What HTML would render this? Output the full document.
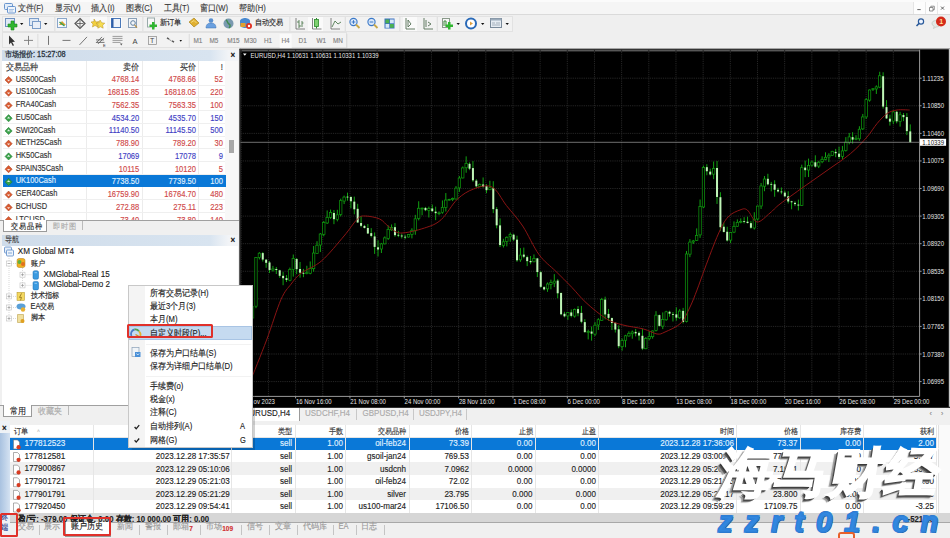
<!DOCTYPE html><html><head><meta charset="utf-8"><style>
html,body{margin:0;padding:0;width:950px;height:538px;overflow:hidden;background:#f0f0f0;font-family:"Liberation Sans", sans-serif;}
.t{position:absolute;white-space:nowrap;-webkit-text-stroke:0.12px currentColor;transform:scaleY(1.12);}
.b{position:absolute;box-sizing:border-box;}
svg{position:absolute;left:0;top:0;}
</style></head><body>
<div class="b" style="left:0px;top:0px;width:950px;height:15px;background:#f5f5f5;border-bottom:1px solid #dadada"></div>
<div class="b" style="left:0px;top:0px;width:950px;height:2px;background:#fbfbfb"></div>
<svg width="20" height="16"><rect x="4.5" y="3.5" width="8" height="6" rx="1" fill="#e4eef9" stroke="#5a8ac8" stroke-width="0.9"/><rect x="7.5" y="6.5" width="8" height="6.5" rx="1" fill="#eef4fb" stroke="#5a8ac8" stroke-width="0.9"/><path d="M9 9.5h5M9 11h4" stroke="#7aa0d0" stroke-width="0.6"/></svg>
<div class="t" style="left:17.7px;top:1.10px;font-size:7.6px;line-height:15.2px;color:#3a3a3a;">文件(F)</div>
<div class="t" style="left:54.5px;top:1.10px;font-size:7.6px;line-height:15.2px;color:#3a3a3a;">显示(V)</div>
<div class="t" style="left:91.4px;top:1.10px;font-size:7.6px;line-height:15.2px;color:#3a3a3a;">插入(I)</div>
<div class="t" style="left:125.8px;top:1.10px;font-size:7.6px;line-height:15.2px;color:#3a3a3a;">图表(C)</div>
<div class="t" style="left:163.6px;top:1.10px;font-size:7.6px;line-height:15.2px;color:#3a3a3a;">工具(T)</div>
<div class="t" style="left:199.8px;top:1.10px;font-size:7.6px;line-height:15.2px;color:#3a3a3a;">窗口(W)</div>
<div class="t" style="left:239.3px;top:1.10px;font-size:7.6px;line-height:15.2px;color:#3a3a3a;">帮助(H)</div>
<div class="b" style="left:913px;top:2px;width:37px;height:12px;background:#fdfdfd;border-left:1px solid #e4e4e4"></div>
<div class="b" style="left:925px;top:2px;width:1px;height:12px;background:#e8e8e8"></div>
<div class="b" style="left:937px;top:2px;width:1px;height:12px;background:#e8e8e8"></div>
<svg width="950" height="16"><path d="M917.3 9.6h3.4" stroke="#555" stroke-width="0.9"/><path d="M929.5 7.5h3.5v3.5h-3.5zM930.8 7.5v-1.3h3.5v3.5h-1.3" stroke="#666" stroke-width="0.7" fill="none"/><path d="M941 6.6l3 3M944 6.6l-3 3" stroke="#555" stroke-width="0.9"/></svg>
<div class="b" style="left:0px;top:15px;width:950px;height:34px;background:#efefef"></div>
<div class="b" style="left:2px;top:16px;width:511px;height:16px;background:#f2f2f2;border:1px solid #e2e2e2"></div>
<div class="b" style="left:2px;top:32px;width:345px;height:16px;background:#f2f2f2;border:1px solid #e2e2e2"></div>
<svg width="950" height="50" viewBox="0 0 950 50"><rect x="5.5" y="18.5" width="9" height="8" fill="#dfe9f5" stroke="#6c8fbf"/><path d="M11 21h3v3h3v3h-3v3h-3v-3h-3v-3h3z" fill="#2fb52f" stroke="#1d8a1d" stroke-width="0.6"/><path d="M20 23l3.4 0l-1.7 2z" fill="#111"/><rect x="29.5" y="18.5" width="9" height="7" fill="#dfe9f5" stroke="#7a9cc8"/><rect x="32.5" y="21.5" width="8" height="7" fill="#e8eef7" stroke="#7a9cc8"/><path d="M44 23l3.4 0l-1.7 2z" fill="#111"/><rect x="54.5" y="17" width="0.8" height="14" fill="#d6d6d6"/><rect x="142.5" y="17" width="0.8" height="14" fill="#d6d6d6"/><rect x="289.5" y="17" width="0.8" height="14" fill="#d6d6d6"/><rect x="344.8" y="17" width="0.8" height="14" fill="#d6d6d6"/><rect x="399.5" y="17" width="0.8" height="14" fill="#d6d6d6"/><rect x="436.8" y="17" width="0.8" height="14" fill="#d6d6d6"/><rect x="57.5" y="18.5" width="9" height="9" fill="#f4f8ff" stroke="#8aa6c8"/><path d="M59 25l3-4 4 4z" fill="#d9a030"/><path d="M59.5 22l5 4" stroke="#3aa050" stroke-width="1.5"/><path d="M80 18.5l5 5-5 5-5-5z" fill="none" stroke="#555" stroke-width="1.2"/><path d="M80 20v7M76.5 23.5h7" stroke="#555" stroke-width="0.8"/><rect x="90" y="16.5" width="17" height="14" fill="#fafafa"/><path d="M94 19l2 3 3-.5-2 2.5 1 3-3-1.5-2.5 1.5.5-3-2-2 3-.5z" fill="#f2d040" stroke="#b89020" stroke-width="0.5"/><path d="M100 20l1.8 2.8 3 .4-2.2 2 .6 3-2.7-1.4-2.7 1.4.6-3-2.2-2 3-.4z" fill="#f5dc50" stroke="#b89020" stroke-width="0.5"/><rect x="110" y="17" width="12" height="13" fill="#fbfbfb"/><rect x="111.5" y="18.5" width="9" height="9" fill="#eef3fa" stroke="#4a78b8"/><rect x="111.5" y="18.5" width="2" height="9" fill="#2e5ea8"/><rect x="128.5" y="18.5" width="8" height="9" fill="#f3f6fa" stroke="#8aa0b8"/><circle cx="133" cy="23" r="2.3" fill="none" stroke="#6080a0"/><path d="M134.5 24.8l2.5 2.8" stroke="#b89040" stroke-width="1.2"/><rect x="147.5" y="18" width="7" height="9" fill="#f8f8f8" stroke="#9aa"/><path d="M152 22h2.5v2.5h2.5v2.5h-2.5v2.5h-2.5v-2.5h-2.5v-2.5h2.5z" fill="#2fb52f"/><path d="M189 22l5-4 5 5-5 4z" fill="#e0b030" stroke="#a07a10" stroke-width="0.6"/><path d="M191 22.5l3-2 2.5 2.5" stroke="#fff2b0" stroke-width="0.6" fill="none"/><circle cx="211" cy="20.5" r="2.3" fill="#5a90d0"/><path d="M206 28c0-4 2.5-5 5-5s5 1 5 5z" fill="#6aa0e0" stroke="#3a70b0" stroke-width="0.5"/><circle cx="228.5" cy="23.5" r="5" fill="#7a9ab0"/><path d="M226 20c2 1 1 3 3 4s1 3 0 4" stroke="#3f8a50" stroke-width="1.4" fill="none"/><path d="M240 21c0-2 3-3 5-3s5 1 5 3v4c0 2-3 3-5 3s-5-1-5-3z" fill="#4a8ad0"/><path d="M240.5 23h5v4h-5z" fill="#e0a030"/><circle cx="249" cy="26" r="3" fill="#e03020"/><circle cx="249" cy="26" r="1.2" fill="#fff"/><rect x="308" y="17" width="15" height="14" fill="#fafafa"/><path d="M296 29h9" stroke="#666" stroke-width="0.8"/><path d="M296 18v11" stroke="#666" stroke-width="0.8"/><path d="M312.5 29h9" stroke="#666" stroke-width="0.8"/><path d="M312.5 18v11" stroke="#666" stroke-width="0.8"/><path d="M331 29h9" stroke="#666" stroke-width="0.8"/><path d="M331 18v11" stroke="#666" stroke-width="0.8"/><path d="M299 20v8M297 22h2M299 26h2M302 21v6M302 23h1.5" stroke="#507a50" stroke-width="0.9"/><rect x="314.5" y="19.5" width="4" height="7" fill="#7fd070" stroke="#2a8a2a" stroke-width="0.8"/><path d="M316.5 18v1.5M316.5 26.5v2" stroke="#2a8a2a"/><path d="M332 27l3-6 3 3 3-2" stroke="#507a50" stroke-width="0.9" fill="none"/><circle cx="353.5" cy="22" r="3.6" fill="#dbe8f8" stroke="#3a78c8" stroke-width="1.1"/><path d="M356.0 24.5l3.5 3.5" stroke="#c8a848" stroke-width="1.8"/><path d="M351.7 22h3.6" stroke="#3a78c8" stroke-width="1"/><path d="M353.5 20.2v3.6" stroke="#3a78c8" stroke-width="1"/><circle cx="371.5" cy="22" r="3.6" fill="#dbe8f8" stroke="#3a78c8" stroke-width="1.1"/><path d="M374.0 24.5l3.5 3.5" stroke="#c8a848" stroke-width="1.8"/><path d="M369.7 22h3.6" stroke="#3a78c8" stroke-width="1"/><rect x="384.5" y="18.5" width="10" height="10" fill="#3a70c0"/><rect x="385.5" y="19.5" width="3.8" height="3.8" fill="#4ab050"/><rect x="390" y="24" width="3.8" height="3.8" fill="#4ab050"/><rect x="390" y="19.5" width="3.8" height="3.8" fill="#d8e8f8"/><rect x="385.5" y="24" width="3.8" height="3.8" fill="#d8e8f8"/><rect x="403" y="17" width="14" height="14" fill="#fafafa"/><path d="M406 18v11h9M408 20v7l3-3z" stroke="#557055" stroke-width="0.9" fill="none"/><path d="M424 18v11h9M426 20v7M428 22l3 2-3 2" stroke="#557055" stroke-width="0.9" fill="none"/><rect x="442.5" y="18.5" width="7" height="9" fill="#f6f6f6" stroke="#8a9a8a"/><path d="M444 26v-5h2v5" stroke="#3a8a3a" fill="none"/><path d="M448 24h2.5v2.5h2.5v2.5h-2.5v2.5h-2.5v-2.5h-2.5v-2.5h2.5z" fill="#2fb52f" transform="translate(0,-2)"/><path d="M456.5 23l3.4 0l-1.7 2z" fill="#111"/><circle cx="471" cy="23.5" r="5" fill="#fff" stroke="#2a6ab8" stroke-width="2"/><path d="M470 21.5l3 2-3 2z" fill="#e0a040"/><path d="M481 23l3.4 0l-1.7 2z" fill="#111"/><rect x="490.5" y="18.5" width="11" height="9" fill="#e6ecf2" stroke="#7a8a9a"/><rect x="490.5" y="18.5" width="11" height="2" fill="#9aaaba"/><path d="M492 23h3M496 23h4M492 25h8" stroke="#8898a8" stroke-width="0.7"/><path d="M505.5 23l3.4 0l-1.7 2z" fill="#111"/><g transform="translate(0,0.9)"><path d="M9 34.5l0 9 2-2 1.8 3.5 1.2-.6-1.8-3.4 2.8-.2z" fill="#333"/><path d="M28.5 35v9M24 39.5h9" stroke="#777" stroke-width="0.9"/><rect x="37.5" y="33" width="0.8" height="14" fill="#d6d6d6"/><path d="M48.5 35v9" stroke="#666" stroke-width="0.9"/><path d="M62.5 39.5h8" stroke="#666" stroke-width="0.9"/><path d="M79.5 44l7.5-8" stroke="#666" stroke-width="0.9"/><path d="M96 42l6-6M98 43l6-6M96 39h8M96.5 41.5h8" stroke="#555" stroke-width="0.8"/><text x="103" y="46" font-size="4" fill="#333" font-family="Liberation Sans">E</text><path d="M112.5 35.5h10M112.5 37.5h10M112.5 39.5h10M112.5 41.5h8" stroke="#777" stroke-width="0.7"/><path d="M120 42.5l2.5 0-1.25 2z" fill="#555"/><text x="132.5" y="43" font-size="7.5" fill="#444" font-family="Liberation Sans">A</text><rect x="148.5" y="35.5" width="8" height="8" fill="none" stroke="#888" stroke-width="0.7"/><text x="150" y="42.5" font-size="7" fill="#444" font-family="Liberation Sans">T</text><path d="M167 37l2 1.2M172 40l2 1.2" stroke="#555" stroke-width="1.5"/><path d="M169 38.5l2.5 1.5" stroke="#555" stroke-width="0.6"/><path d="M179.5 39l2.5 0-1.25 1.8z" fill="#111"/><rect x="188.8" y="33" width="0.8" height="14" fill="#d6d6d6"/><rect x="279.7" y="33" width="12" height="14" fill="#fafafa"/><rect x="346.5" y="33" width="0.8" height="14" fill="#d6d6d6"/></g><circle cx="921" cy="21.5" r="2.6" fill="#eef4ff" stroke="#2a5a9a" stroke-width="1.2"/><path d="M919.2 23.3l-2.7 2.7" stroke="#2a5a9a" stroke-width="1.6"/><path d="M932 24a4 3.2 0 1 1 4 3l-2.5 1.5.7-2.2a4 3.2 0 0 1-2.2-2.3z" fill="#e4e8e4" stroke="#b8c0b8" stroke-width="0.6"/><circle cx="941" cy="21.5" r="5" fill="#d42a1a"/><text x="939.2" y="24.3" font-size="7" font-weight="bold" fill="#ffe0a0" font-family="Liberation Sans">1</text></svg>
<div class="t" style="left:159.5px;top:16.40px;font-size:7.4px;line-height:14.8px;color:#222;">新订单</div>
<div class="t" style="left:254.5px;top:16.40px;font-size:7.4px;line-height:14.8px;color:#222;">自动交易</div>
<div class="t" style="left:188px;width:20px;text-align:center;top:34.2px;font-size:6.4px;line-height:14px;color:#808080">M1</div>
<div class="t" style="left:204px;width:20px;text-align:center;top:34.2px;font-size:6.4px;line-height:14px;color:#808080">M5</div>
<div class="t" style="left:223.4px;width:20px;text-align:center;top:34.2px;font-size:6.4px;line-height:14px;color:#808080">M15</div>
<div class="t" style="left:240.3px;width:20px;text-align:center;top:34.2px;font-size:6.4px;line-height:14px;color:#808080">M30</div>
<div class="t" style="left:258px;width:20px;text-align:center;top:34.2px;font-size:6.4px;line-height:14px;color:#808080">H1</div>
<div class="t" style="left:275.5px;width:20px;text-align:center;top:34.2px;font-size:6.4px;line-height:14px;color:#808080">H4</div>
<div class="t" style="left:292.7px;width:20px;text-align:center;top:34.2px;font-size:6.4px;line-height:14px;color:#808080">D1</div>
<div class="t" style="left:311.2px;width:20px;text-align:center;top:34.2px;font-size:6.4px;line-height:14px;color:#808080">W1</div>
<div class="t" style="left:328px;width:20px;text-align:center;top:34.2px;font-size:6.4px;line-height:14px;color:#808080">MN</div>
<div class="b" style="left:0px;top:48px;width:239px;height:186px;background:#f0f0f0"></div>
<div class="b" style="left:2px;top:49.5px;width:236px;height:11px;background:linear-gradient(90deg,#cfdcea 0%,#d8e4f0 88%,#f2f4f7 96%)"></div>
<div class="t" style="left:5px;top:47.65px;font-size:7.35px;line-height:14.7px;color:#2a3340;-webkit-text-stroke:0.25px #2a3340">市场报价: 15:27:08</div>
<div class="t" style="left:230.4px;top:47.60px;font-size:8px;line-height:16px;color:#111;font-weight:bold">×</div>
<div class="b" style="left:2px;top:60.5px;width:223px;height:162px;background:#fff"></div>
<div class="b" style="left:225px;top:60.5px;width:12.5px;height:160px;background:#f8f8f8"></div>
<div class="b" style="left:228.6px;top:140px;width:5px;height:12.5px;background:#a8a8a8"></div>
<div class="t" style="left:5.6px;top:59.50px;font-size:7.7px;line-height:15.4px;color:#333;">交易品种</div>
<div class="t" style="right:811.00px;top:59.50px;font-size:7.7px;line-height:15.4px;color:#333;">卖价</div>
<div class="t" style="right:754.20px;top:59.50px;font-size:7.7px;line-height:15.4px;color:#333;">买价</div>
<div class="t" style="right:727.00px;top:59.50px;font-size:7.7px;line-height:15.4px;color:#333;">!</div>
<div class="b" style="left:86.4px;top:60.5px;width:1px;height:160px;background:#ececec"></div>
<div class="b" style="left:141.5px;top:60.5px;width:1px;height:160px;background:#ececec"></div>
<div class="b" style="left:197.6px;top:60.5px;width:1px;height:160px;background:#ececec"></div>
<div class="b" style="left:3px;top:84.69999999999999px;width:222px;height:0.8px;background:#efefef"></div>
<div class="t" style="left:15.7px;top:72.55px;font-size:7.45px;line-height:14.9px;color:#333;">US500Cash</div>
<div class="t" style="right:810.70px;top:72.40px;font-size:7.6px;line-height:15.2px;color:#d04848;">4768.14</div>
<div class="t" style="right:754.00px;top:72.40px;font-size:7.6px;line-height:15.2px;color:#d04848;">4768.66</div>
<div class="t" style="right:727.00px;top:72.40px;font-size:7.6px;line-height:15.2px;color:#d04848;">52</div>
<div class="b" style="left:3px;top:97.43999999999998px;width:222px;height:0.8px;background:#efefef"></div>
<div class="t" style="left:15.7px;top:85.29px;font-size:7.45px;line-height:14.9px;color:#333;">US100Cash</div>
<div class="t" style="right:810.70px;top:85.14px;font-size:7.6px;line-height:15.2px;color:#d04848;">16815.85</div>
<div class="t" style="right:754.00px;top:85.14px;font-size:7.6px;line-height:15.2px;color:#d04848;">16818.05</div>
<div class="t" style="right:727.00px;top:85.14px;font-size:7.6px;line-height:15.2px;color:#d04848;">220</div>
<div class="b" style="left:3px;top:110.17999999999999px;width:222px;height:0.8px;background:#efefef"></div>
<div class="t" style="left:15.7px;top:98.03px;font-size:7.45px;line-height:14.9px;color:#333;">FRA40Cash</div>
<div class="t" style="right:810.70px;top:97.88px;font-size:7.6px;line-height:15.2px;color:#d04848;">7562.35</div>
<div class="t" style="right:754.00px;top:97.88px;font-size:7.6px;line-height:15.2px;color:#d04848;">7563.35</div>
<div class="t" style="right:727.00px;top:97.88px;font-size:7.6px;line-height:15.2px;color:#d04848;">100</div>
<div class="b" style="left:3px;top:122.91999999999999px;width:222px;height:0.8px;background:#efefef"></div>
<div class="t" style="left:15.7px;top:110.77px;font-size:7.45px;line-height:14.9px;color:#333;">EU50Cash</div>
<div class="t" style="right:810.70px;top:110.62px;font-size:7.6px;line-height:15.2px;color:#3e3ec4;">4534.20</div>
<div class="t" style="right:754.00px;top:110.62px;font-size:7.6px;line-height:15.2px;color:#3e3ec4;">4535.70</div>
<div class="t" style="right:727.00px;top:110.62px;font-size:7.6px;line-height:15.2px;color:#3e3ec4;">150</div>
<div class="b" style="left:3px;top:135.66px;width:222px;height:0.8px;background:#efefef"></div>
<div class="t" style="left:15.7px;top:123.51px;font-size:7.45px;line-height:14.9px;color:#333;">SWI20Cash</div>
<div class="t" style="right:810.70px;top:123.36px;font-size:7.6px;line-height:15.2px;color:#3e3ec4;">11140.50</div>
<div class="t" style="right:754.00px;top:123.36px;font-size:7.6px;line-height:15.2px;color:#3e3ec4;">11145.50</div>
<div class="t" style="right:727.00px;top:123.36px;font-size:7.6px;line-height:15.2px;color:#3e3ec4;">500</div>
<div class="b" style="left:3px;top:148.4px;width:222px;height:0.8px;background:#efefef"></div>
<div class="t" style="left:15.7px;top:136.25px;font-size:7.45px;line-height:14.9px;color:#333;">NETH25Cash</div>
<div class="t" style="right:810.70px;top:136.10px;font-size:7.6px;line-height:15.2px;color:#d04848;">788.90</div>
<div class="t" style="right:754.00px;top:136.10px;font-size:7.6px;line-height:15.2px;color:#d04848;">789.20</div>
<div class="t" style="right:727.00px;top:136.10px;font-size:7.6px;line-height:15.2px;color:#d04848;">30</div>
<div class="b" style="left:3px;top:161.14px;width:222px;height:0.8px;background:#efefef"></div>
<div class="t" style="left:15.7px;top:148.99px;font-size:7.45px;line-height:14.9px;color:#333;">HK50Cash</div>
<div class="t" style="right:810.70px;top:148.84px;font-size:7.6px;line-height:15.2px;color:#3e3ec4;">17069</div>
<div class="t" style="right:754.00px;top:148.84px;font-size:7.6px;line-height:15.2px;color:#3e3ec4;">17078</div>
<div class="t" style="right:727.00px;top:148.84px;font-size:7.6px;line-height:15.2px;color:#3e3ec4;">9</div>
<div class="b" style="left:3px;top:173.88px;width:222px;height:0.8px;background:#efefef"></div>
<div class="t" style="left:15.7px;top:161.73px;font-size:7.45px;line-height:14.9px;color:#333;">SPAIN35Cash</div>
<div class="t" style="right:810.70px;top:161.58px;font-size:7.6px;line-height:15.2px;color:#d04848;">10115</div>
<div class="t" style="right:754.00px;top:161.58px;font-size:7.6px;line-height:15.2px;color:#d04848;">10120</div>
<div class="t" style="right:727.00px;top:161.58px;font-size:7.6px;line-height:15.2px;color:#d04848;">5</div>
<div class="b" style="left:3px;top:174.82px;width:223px;height:12.2px;background:#0a78d7"></div>
<div class="t" style="left:15.7px;top:174.47px;font-size:7.45px;line-height:14.9px;color:#e0f2ff;">UK100Cash</div>
<div class="t" style="right:810.70px;top:174.32px;font-size:7.6px;line-height:15.2px;color:#e0f2ff;">7738.50</div>
<div class="t" style="right:754.00px;top:174.32px;font-size:7.6px;line-height:15.2px;color:#e0f2ff;">7739.50</div>
<div class="t" style="right:727.00px;top:174.32px;font-size:7.6px;line-height:15.2px;color:#e0f2ff;">100</div>
<div class="b" style="left:3px;top:199.35999999999999px;width:222px;height:0.8px;background:#efefef"></div>
<div class="t" style="left:15.7px;top:187.21px;font-size:7.45px;line-height:14.9px;color:#333;">GER40Cash</div>
<div class="t" style="right:810.70px;top:187.06px;font-size:7.6px;line-height:15.2px;color:#d04848;">16759.90</div>
<div class="t" style="right:754.00px;top:187.06px;font-size:7.6px;line-height:15.2px;color:#d04848;">16764.70</div>
<div class="t" style="right:727.00px;top:187.06px;font-size:7.6px;line-height:15.2px;color:#d04848;">480</div>
<div class="b" style="left:3px;top:212.1px;width:222px;height:0.8px;background:#efefef"></div>
<div class="t" style="left:15.7px;top:199.95px;font-size:7.45px;line-height:14.9px;color:#333;">BCHUSD</div>
<div class="t" style="right:810.70px;top:199.80px;font-size:7.6px;line-height:15.2px;color:#d04848;">272.88</div>
<div class="t" style="right:754.00px;top:199.80px;font-size:7.6px;line-height:15.2px;color:#d04848;">275.11</div>
<div class="t" style="right:727.00px;top:199.80px;font-size:7.6px;line-height:15.2px;color:#d04848;">223</div>
<div class="b" style="left:3px;top:224.84px;width:222px;height:0.8px;background:#efefef"></div>
<div class="t" style="left:15.7px;top:212.69px;font-size:7.45px;line-height:14.9px;color:#333;">LTCUSD</div>
<div class="t" style="right:810.70px;top:212.54px;font-size:7.6px;line-height:15.2px;color:#d04848;">73.40</div>
<div class="t" style="right:754.00px;top:212.54px;font-size:7.6px;line-height:15.2px;color:#d04848;">73.80</div>
<div class="t" style="right:727.00px;top:212.54px;font-size:7.6px;line-height:15.2px;color:#d04848;">140</div>
<svg width="240" height="240"><path d="M8.6 76.4l3.6 3.6-3.6 3.6-3.6-3.6z" fill="#d85a30" stroke="#a83a18" stroke-width="0.5"/><path d="M8.6 81.6l-1.6-1.8h3.2z" fill="#fff" opacity="0.85"/><path d="M8.6 89.14l3.6 3.6-3.6 3.6-3.6-3.6z" fill="#d85a30" stroke="#a83a18" stroke-width="0.5"/><path d="M8.6 94.33999999999999l-1.6-1.8h3.2z" fill="#fff" opacity="0.85"/><path d="M8.6 101.88000000000001l3.6 3.6-3.6 3.6-3.6-3.6z" fill="#d85a30" stroke="#a83a18" stroke-width="0.5"/><path d="M8.6 107.08l-1.6-1.8h3.2z" fill="#fff" opacity="0.85"/><path d="M8.6 114.62l3.6 3.6-3.6 3.6-3.6-3.6z" fill="#3aa04a" stroke="#1a7a2a" stroke-width="0.5"/><path d="M8.6 116.62l-1.6 1.8h3.2z" fill="#fff" opacity="0.85"/><path d="M8.6 127.36000000000001l3.6 3.6-3.6 3.6-3.6-3.6z" fill="#3aa04a" stroke="#1a7a2a" stroke-width="0.5"/><path d="M8.6 129.36l-1.6 1.8h3.2z" fill="#fff" opacity="0.85"/><path d="M8.6 140.10000000000002l3.6 3.6-3.6 3.6-3.6-3.6z" fill="#d85a30" stroke="#a83a18" stroke-width="0.5"/><path d="M8.6 145.3l-1.6-1.8h3.2z" fill="#fff" opacity="0.85"/><path d="M8.6 152.84l3.6 3.6-3.6 3.6-3.6-3.6z" fill="#3aa04a" stroke="#1a7a2a" stroke-width="0.5"/><path d="M8.6 154.84l-1.6 1.8h3.2z" fill="#fff" opacity="0.85"/><path d="M8.6 165.58l3.6 3.6-3.6 3.6-3.6-3.6z" fill="#d85a30" stroke="#a83a18" stroke-width="0.5"/><path d="M8.6 170.78l-1.6-1.8h3.2z" fill="#fff" opacity="0.85"/><path d="M8.6 178.32l3.6 3.6-3.6 3.6-3.6-3.6z" fill="#3aa04a" stroke="#1a7a2a" stroke-width="0.5"/><path d="M8.6 180.32l-1.6 1.8h3.2z" fill="#fff" opacity="0.85"/><path d="M8.6 191.06l3.6 3.6-3.6 3.6-3.6-3.6z" fill="#d85a30" stroke="#a83a18" stroke-width="0.5"/><path d="M8.6 196.26l-1.6-1.8h3.2z" fill="#fff" opacity="0.85"/><path d="M8.6 203.8l3.6 3.6-3.6 3.6-3.6-3.6z" fill="#d85a30" stroke="#a83a18" stroke-width="0.5"/><path d="M8.6 209.0l-1.6-1.8h3.2z" fill="#fff" opacity="0.85"/><path d="M8.6 216.54000000000002l3.6 3.6-3.6 3.6-3.6-3.6z" fill="#d85a30" stroke="#a83a18" stroke-width="0.5"/><path d="M8.6 221.74l-1.6-1.8h3.2z" fill="#fff" opacity="0.85"/></svg>
<div class="b" style="left:0px;top:219.5px;width:239px;height:14px;background:#f0f0f0;border-top:1px solid #a0a0a0"></div>
<div class="b" style="left:3px;top:219.5px;width:44px;height:12.5px;background:#fff;border:1px solid #9a9a9a;border-top:none"></div>
<div class="t" style="left:10.9px;top:218.50px;font-size:7.5px;line-height:15.0px;color:#222;">交易品种</div>
<div class="t" style="left:53.4px;top:218.50px;font-size:7.5px;line-height:15.0px;color:#aaa;">即时图</div>
<div class="b" style="left:82px;top:221px;width:0.8px;height:9px;background:#bbb"></div>
<div class="b" style="left:2px;top:235px;width:236px;height:11px;background:linear-gradient(90deg,#cfdcea 0%,#d8e4f0 88%,#f2f4f7 96%)"></div>
<div class="t" style="left:5px;top:233.30px;font-size:7.2px;line-height:14.4px;color:#444;">导航</div>
<div class="t" style="left:230.4px;top:233.00px;font-size:8px;line-height:16px;color:#111;font-weight:bold">×</div>
<div class="b" style="left:2px;top:245.8px;width:236px;height:159.7px;background:#fff"></div>
<div class="t" style="left:17.8px;top:244.40px;font-size:8.1px;line-height:16.2px;color:#222;">XM Global MT4</div>
<div class="t" style="left:30.5px;top:256.60px;font-size:7.4px;line-height:14.8px;color:#222;">账户</div>
<div class="t" style="left:43.5px;top:266.60px;font-size:8.1px;line-height:16.2px;color:#222;">XMGlobal-Real 15</div>
<div class="t" style="left:43.5px;top:277.30px;font-size:8.1px;line-height:16.2px;color:#222;">XMGlobal-Demo 2</div>
<div class="t" style="left:30.5px;top:289.00px;font-size:7.4px;line-height:14.8px;color:#222;">技术指标</div>
<div class="t" style="left:30.5px;top:300.10px;font-size:7.4px;line-height:14.8px;color:#222;">EA交易</div>
<div class="t" style="left:30.5px;top:311.10px;font-size:7.4px;line-height:14.8px;color:#222;">脚本</div>
<svg width="240" height="420"><rect x="4.5" y="247" width="7" height="6" rx="1" fill="#e6eef8" stroke="#5a8ac8" stroke-width="0.8"/><rect x="6.5" y="250" width="7" height="6" rx="1" fill="#eef4fb" stroke="#5a8ac8" stroke-width="0.8"/><path d="M8 253h4" stroke="#5a8ac8" stroke-width="0.7"/><path d="M9 256v62.5M9 263.5h7M9 296.4h7M9 307.5h7M9 318.5h7M22.5 268v17.4M22.5 274.7h9M22.5 285.4h9" stroke="#c8c8c8" stroke-width="0.7" stroke-dasharray="1 1"/><rect x="6.5" y="261.0" width="5" height="5" fill="#fff" stroke="#c0c0c0" stroke-width="0.6"/><path d="M7.5 263.5h3" stroke="#888" stroke-width="0.6"/><rect x="17" y="258.5" width="8" height="9" rx="2" fill="#f0b020" stroke="#b07a10" stroke-width="0.5"/><circle cx="19.5" cy="262" r="2" fill="#60b040"/><circle cx="23" cy="264" r="2" fill="#e07020"/><rect x="20.0" y="272.2" width="5" height="5" fill="#fff" stroke="#c0c0c0" stroke-width="0.6"/><path d="M21.0 274.7h3" stroke="#888" stroke-width="0.6"/><path d="M22.5 273.2v3" stroke="#888" stroke-width="0.6"/><rect x="20.0" y="282.9" width="5" height="5" fill="#fff" stroke="#c0c0c0" stroke-width="0.6"/><path d="M21.0 285.4h3" stroke="#888" stroke-width="0.6"/><path d="M22.5 283.9v3" stroke="#888" stroke-width="0.6"/><rect x="33" y="270.7" width="5.5" height="8.5" rx="1.5" fill="#3a9ae0" stroke="#1a6ab0" stroke-width="0.5"/><path d="M34.5 272.7h2.5" stroke="#bfe0ff" stroke-width="0.6"/><rect x="33" y="281.4" width="5.5" height="8.5" rx="1.5" fill="#3a9ae0" stroke="#1a6ab0" stroke-width="0.5"/><path d="M34.5 283.4h2.5" stroke="#bfe0ff" stroke-width="0.6"/><rect x="6.5" y="293.9" width="5" height="5" fill="#fff" stroke="#c0c0c0" stroke-width="0.6"/><path d="M7.5 296.4h3" stroke="#888" stroke-width="0.6"/><path d="M9 294.9v3" stroke="#888" stroke-width="0.6"/><rect x="17" y="292.4" width="7.5" height="8" fill="#f4d860" stroke="#b09020" stroke-width="0.5"/><path d="M21.5 293.4l-2 4h2l-1 3" stroke="#806010" stroke-width="0.7" fill="none"/><rect x="6.5" y="305.0" width="5" height="5" fill="#fff" stroke="#c0c0c0" stroke-width="0.6"/><path d="M7.5 307.5h3" stroke="#888" stroke-width="0.6"/><path d="M9 306.0v3" stroke="#888" stroke-width="0.6"/><ellipse cx="21" cy="306.5" rx="4.5" ry="3" fill="#5aa0d8"/><circle cx="23" cy="309.5" r="2.2" fill="#e8b030"/><rect x="6.5" y="316.0" width="5" height="5" fill="#fff" stroke="#c0c0c0" stroke-width="0.6"/><path d="M7.5 318.5h3" stroke="#888" stroke-width="0.6"/><path d="M9 317.0v3" stroke="#888" stroke-width="0.6"/><path d="M17.5 314.5h6v8h-6z" fill="#f0e0a0" stroke="#b09030" stroke-width="0.5"/><circle cx="22.5" cy="321.0" r="2" fill="#e0a020"/></svg>
<div class="b" style="left:0px;top:404.8px;width:239px;height:13.5px;background:#f0f0f0;border-top:1px solid #a0a0a0"></div>
<div class="b" style="left:3px;top:404.8px;width:28.5px;height:12.5px;background:#fff;border:1px solid #9a9a9a;border-top:none"></div>
<div class="t" style="left:9.5px;top:404.20px;font-size:8px;line-height:16px;color:#222;">常用</div>
<div class="t" style="left:38px;top:404.20px;font-size:8px;line-height:16px;color:#aaa;">收藏夹</div>
<div class="b" style="left:67.5px;top:406px;width:0.8px;height:9px;background:#bbb"></div>
<svg width="950" height="420" viewBox="0 0 950 420"><rect x="239.5" y="48.8" width="710.5" height="359.0" fill="#000"/><rect x="239.5" y="48.8" width="710.5" height="1" fill="#404040"/><line x1="240.5" y1="50.8" x2="919.6" y2="50.8" stroke="#8a8a8a" stroke-width="0.9"/><rect x="239.5" y="48.8" width="1" height="359.0" fill="#404040"/><line x1="241.26" y1="49.8" x2="241.26" y2="396.4" stroke="#262626" stroke-width="1" stroke-dasharray="1.2 1"/><line x1="268.43" y1="49.8" x2="268.43" y2="396.4" stroke="#262626" stroke-width="1" stroke-dasharray="1.2 1"/><line x1="295.60" y1="49.8" x2="295.60" y2="396.4" stroke="#262626" stroke-width="1" stroke-dasharray="1.2 1"/><line x1="322.77" y1="49.8" x2="322.77" y2="396.4" stroke="#262626" stroke-width="1" stroke-dasharray="1.2 1"/><line x1="349.94" y1="49.8" x2="349.94" y2="396.4" stroke="#262626" stroke-width="1" stroke-dasharray="1.2 1"/><line x1="377.11" y1="49.8" x2="377.11" y2="396.4" stroke="#262626" stroke-width="1" stroke-dasharray="1.2 1"/><line x1="404.28" y1="49.8" x2="404.28" y2="396.4" stroke="#262626" stroke-width="1" stroke-dasharray="1.2 1"/><line x1="431.45" y1="49.8" x2="431.45" y2="396.4" stroke="#262626" stroke-width="1" stroke-dasharray="1.2 1"/><line x1="458.62" y1="49.8" x2="458.62" y2="396.4" stroke="#262626" stroke-width="1" stroke-dasharray="1.2 1"/><line x1="485.79" y1="49.8" x2="485.79" y2="396.4" stroke="#262626" stroke-width="1" stroke-dasharray="1.2 1"/><line x1="512.96" y1="49.8" x2="512.96" y2="396.4" stroke="#262626" stroke-width="1" stroke-dasharray="1.2 1"/><line x1="540.13" y1="49.8" x2="540.13" y2="396.4" stroke="#262626" stroke-width="1" stroke-dasharray="1.2 1"/><line x1="567.30" y1="49.8" x2="567.30" y2="396.4" stroke="#262626" stroke-width="1" stroke-dasharray="1.2 1"/><line x1="594.47" y1="49.8" x2="594.47" y2="396.4" stroke="#262626" stroke-width="1" stroke-dasharray="1.2 1"/><line x1="621.64" y1="49.8" x2="621.64" y2="396.4" stroke="#262626" stroke-width="1" stroke-dasharray="1.2 1"/><line x1="648.81" y1="49.8" x2="648.81" y2="396.4" stroke="#262626" stroke-width="1" stroke-dasharray="1.2 1"/><line x1="675.98" y1="49.8" x2="675.98" y2="396.4" stroke="#262626" stroke-width="1" stroke-dasharray="1.2 1"/><line x1="703.15" y1="49.8" x2="703.15" y2="396.4" stroke="#262626" stroke-width="1" stroke-dasharray="1.2 1"/><line x1="730.32" y1="49.8" x2="730.32" y2="396.4" stroke="#262626" stroke-width="1" stroke-dasharray="1.2 1"/><line x1="757.49" y1="49.8" x2="757.49" y2="396.4" stroke="#262626" stroke-width="1" stroke-dasharray="1.2 1"/><line x1="784.66" y1="49.8" x2="784.66" y2="396.4" stroke="#262626" stroke-width="1" stroke-dasharray="1.2 1"/><line x1="811.83" y1="49.8" x2="811.83" y2="396.4" stroke="#262626" stroke-width="1" stroke-dasharray="1.2 1"/><line x1="839.00" y1="49.8" x2="839.00" y2="396.4" stroke="#262626" stroke-width="1" stroke-dasharray="1.2 1"/><line x1="866.17" y1="49.8" x2="866.17" y2="396.4" stroke="#262626" stroke-width="1" stroke-dasharray="1.2 1"/><line x1="893.34" y1="49.8" x2="893.34" y2="396.4" stroke="#262626" stroke-width="1" stroke-dasharray="1.2 1"/><line x1="240.5" y1="78.20" x2="919.6" y2="78.20" stroke="#262626" stroke-width="1" stroke-dasharray="1.2 1"/><line x1="240.5" y1="105.78" x2="919.6" y2="105.78" stroke="#262626" stroke-width="1" stroke-dasharray="1.2 1"/><line x1="240.5" y1="133.36" x2="919.6" y2="133.36" stroke="#262626" stroke-width="1" stroke-dasharray="1.2 1"/><line x1="240.5" y1="160.94" x2="919.6" y2="160.94" stroke="#262626" stroke-width="1" stroke-dasharray="1.2 1"/><line x1="240.5" y1="188.52" x2="919.6" y2="188.52" stroke="#262626" stroke-width="1" stroke-dasharray="1.2 1"/><line x1="240.5" y1="216.10" x2="919.6" y2="216.10" stroke="#262626" stroke-width="1" stroke-dasharray="1.2 1"/><line x1="240.5" y1="243.68" x2="919.6" y2="243.68" stroke="#262626" stroke-width="1" stroke-dasharray="1.2 1"/><line x1="240.5" y1="271.26" x2="919.6" y2="271.26" stroke="#262626" stroke-width="1" stroke-dasharray="1.2 1"/><line x1="240.5" y1="298.84" x2="919.6" y2="298.84" stroke="#262626" stroke-width="1" stroke-dasharray="1.2 1"/><line x1="240.5" y1="326.42" x2="919.6" y2="326.42" stroke="#262626" stroke-width="1" stroke-dasharray="1.2 1"/><line x1="240.5" y1="354.00" x2="919.6" y2="354.00" stroke="#262626" stroke-width="1" stroke-dasharray="1.2 1"/><line x1="240.5" y1="381.58" x2="919.6" y2="381.58" stroke="#262626" stroke-width="1" stroke-dasharray="1.2 1"/><line x1="919.6" y1="49.8" x2="919.6" y2="396.4" stroke="#9a9a9a" stroke-width="1"/><line x1="240.5" y1="396.4" x2="919.6" y2="396.4" stroke="#9a9a9a" stroke-width="1"/><line x1="919.6" y1="78.20" x2="921.6" y2="78.20" stroke="#9a9a9a"/><text transform="matrix(1,0,0,1.22,922.3,80.70)" font-size="6" fill="#e4e4e4" font-family="Liberation Sans">1.11235</text><line x1="919.6" y1="105.78" x2="921.6" y2="105.78" stroke="#9a9a9a"/><text transform="matrix(1,0,0,1.22,922.3,108.28)" font-size="6" fill="#e4e4e4" font-family="Liberation Sans">1.10850</text><line x1="919.6" y1="133.36" x2="921.6" y2="133.36" stroke="#9a9a9a"/><text transform="matrix(1,0,0,1.22,922.3,135.86)" font-size="6" fill="#e4e4e4" font-family="Liberation Sans">1.10460</text><line x1="919.6" y1="160.94" x2="921.6" y2="160.94" stroke="#9a9a9a"/><text transform="matrix(1,0,0,1.22,922.3,163.44)" font-size="6" fill="#e4e4e4" font-family="Liberation Sans">1.10075</text><line x1="919.6" y1="188.52" x2="921.6" y2="188.52" stroke="#9a9a9a"/><text transform="matrix(1,0,0,1.22,922.3,191.02)" font-size="6" fill="#e4e4e4" font-family="Liberation Sans">1.09690</text><line x1="919.6" y1="216.10" x2="921.6" y2="216.10" stroke="#9a9a9a"/><text transform="matrix(1,0,0,1.22,922.3,218.60)" font-size="6" fill="#e4e4e4" font-family="Liberation Sans">1.09305</text><line x1="919.6" y1="243.68" x2="921.6" y2="243.68" stroke="#9a9a9a"/><text transform="matrix(1,0,0,1.22,922.3,246.18)" font-size="6" fill="#e4e4e4" font-family="Liberation Sans">1.08920</text><line x1="919.6" y1="271.26" x2="921.6" y2="271.26" stroke="#9a9a9a"/><text transform="matrix(1,0,0,1.22,922.3,273.76)" font-size="6" fill="#e4e4e4" font-family="Liberation Sans">1.08535</text><line x1="919.6" y1="298.84" x2="921.6" y2="298.84" stroke="#9a9a9a"/><text transform="matrix(1,0,0,1.22,922.3,301.34)" font-size="6" fill="#e4e4e4" font-family="Liberation Sans">1.08150</text><line x1="919.6" y1="326.42" x2="921.6" y2="326.42" stroke="#9a9a9a"/><text transform="matrix(1,0,0,1.22,922.3,328.92)" font-size="6" fill="#e4e4e4" font-family="Liberation Sans">1.07765</text><line x1="919.6" y1="354.00" x2="921.6" y2="354.00" stroke="#9a9a9a"/><text transform="matrix(1,0,0,1.22,922.3,356.50)" font-size="6" fill="#e4e4e4" font-family="Liberation Sans">1.07380</text><line x1="919.6" y1="381.58" x2="921.6" y2="381.58" stroke="#9a9a9a"/><text transform="matrix(1,0,0,1.22,922.3,384.08)" font-size="6" fill="#e4e4e4" font-family="Liberation Sans">1.06995</text><text transform="matrix(1,0,0,1.22,253.6,404)" font-size="6" fill="#e4e4e4" font-family="Liberation Sans">ov 2023</text><line x1="241.26" y1="396.4" x2="241.26" y2="398.4" stroke="#9a9a9a"/><text transform="matrix(1,0,0,1.22,295.90,404)" font-size="6" fill="#e4e4e4" font-family="Liberation Sans">16 Nov 16:00</text><line x1="295.60" y1="396.4" x2="295.60" y2="398.4" stroke="#9a9a9a"/><text transform="matrix(1,0,0,1.22,350.24,404)" font-size="6" fill="#e4e4e4" font-family="Liberation Sans">21 Nov 08:00</text><line x1="349.94" y1="396.4" x2="349.94" y2="398.4" stroke="#9a9a9a"/><text transform="matrix(1,0,0,1.22,404.58,404)" font-size="6" fill="#e4e4e4" font-family="Liberation Sans">24 Nov 00:00</text><line x1="404.28" y1="396.4" x2="404.28" y2="398.4" stroke="#9a9a9a"/><text transform="matrix(1,0,0,1.22,458.92,404)" font-size="6" fill="#e4e4e4" font-family="Liberation Sans">28 Nov 16:00</text><line x1="458.62" y1="396.4" x2="458.62" y2="398.4" stroke="#9a9a9a"/><text transform="matrix(1,0,0,1.22,513.26,404)" font-size="6" fill="#e4e4e4" font-family="Liberation Sans">1 Dec 08:00</text><line x1="512.96" y1="396.4" x2="512.96" y2="398.4" stroke="#9a9a9a"/><text transform="matrix(1,0,0,1.22,567.60,404)" font-size="6" fill="#e4e4e4" font-family="Liberation Sans">6 Dec 00:00</text><line x1="567.30" y1="396.4" x2="567.30" y2="398.4" stroke="#9a9a9a"/><text transform="matrix(1,0,0,1.22,621.94,404)" font-size="6" fill="#e4e4e4" font-family="Liberation Sans">8 Dec 16:00</text><line x1="621.64" y1="396.4" x2="621.64" y2="398.4" stroke="#9a9a9a"/><text transform="matrix(1,0,0,1.22,676.28,404)" font-size="6" fill="#e4e4e4" font-family="Liberation Sans">13 Dec 08:00</text><line x1="675.98" y1="396.4" x2="675.98" y2="398.4" stroke="#9a9a9a"/><text transform="matrix(1,0,0,1.22,730.62,404)" font-size="6" fill="#e4e4e4" font-family="Liberation Sans">18 Dec 00:00</text><line x1="730.32" y1="396.4" x2="730.32" y2="398.4" stroke="#9a9a9a"/><text transform="matrix(1,0,0,1.22,784.96,404)" font-size="6" fill="#e4e4e4" font-family="Liberation Sans">20 Dec 16:00</text><line x1="784.66" y1="396.4" x2="784.66" y2="398.4" stroke="#9a9a9a"/><text transform="matrix(1,0,0,1.22,839.30,404)" font-size="6" fill="#e4e4e4" font-family="Liberation Sans">26 Dec 08:00</text><line x1="839.00" y1="396.4" x2="839.00" y2="398.4" stroke="#9a9a9a"/><text transform="matrix(1,0,0,1.22,893.64,404)" font-size="6" fill="#e4e4e4" font-family="Liberation Sans">29 Dec 00:00</text><line x1="893.34" y1="396.4" x2="893.34" y2="398.4" stroke="#9a9a9a"/><line x1="252.59" y1="306.19" x2="252.59" y2="319.00" stroke="#14b414" stroke-width="0.9"/><rect x="251.39" y="306.69" width="2.4" height="11.31" fill="#000" stroke="#0e9e0e" stroke-width="0.7"/><line x1="255.98" y1="257.01" x2="255.98" y2="308.20" stroke="#14b414" stroke-width="0.9"/><rect x="254.78" y="257.51" width="2.4" height="48.69" fill="#000" stroke="#0e9e0e" stroke-width="0.7"/><line x1="259.37" y1="252.19" x2="259.37" y2="259.43" stroke="#14b414" stroke-width="0.9"/><rect x="258.17" y="253.19" width="2.4" height="4.24" fill="#000" stroke="#0e9e0e" stroke-width="0.7"/><line x1="262.76" y1="252.10" x2="262.76" y2="261.56" stroke="#14b414" stroke-width="0.9"/><rect x="261.76" y="253.10" width="2.0" height="6.46" fill="#c0f5b8"/><line x1="266.15" y1="259.16" x2="266.15" y2="267.80" stroke="#14b414" stroke-width="0.9"/><rect x="265.15" y="259.66" width="2.0" height="3.14" fill="#c0f5b8"/><line x1="269.54" y1="260.97" x2="269.54" y2="273.02" stroke="#14b414" stroke-width="0.9"/><rect x="268.54" y="262.47" width="2.0" height="7.55" fill="#c0f5b8"/><line x1="272.93" y1="265.88" x2="272.93" y2="271.57" stroke="#14b414" stroke-width="0.9"/><rect x="271.73" y="268.88" width="2.4" height="1.19" fill="#000" stroke="#0e9e0e" stroke-width="0.7"/><line x1="276.32" y1="266.97" x2="276.32" y2="274.02" stroke="#14b414" stroke-width="0.9"/><rect x="275.32" y="268.97" width="2.0" height="1.05" fill="#c0f5b8"/><line x1="279.71" y1="269.78" x2="279.71" y2="277.81" stroke="#14b414" stroke-width="0.9"/><rect x="278.71" y="270.28" width="2.0" height="5.54" fill="#c0f5b8"/><line x1="283.10" y1="271.85" x2="283.10" y2="285.19" stroke="#14b414" stroke-width="0.9"/><rect x="282.10" y="275.85" width="2.0" height="2.34" fill="#c0f5b8"/><line x1="286.49" y1="275.14" x2="286.49" y2="282.00" stroke="#14b414" stroke-width="0.9"/><rect x="285.49" y="278.14" width="2.0" height="1.87" fill="#c0f5b8"/><line x1="289.88" y1="267.58" x2="289.88" y2="281.24" stroke="#14b414" stroke-width="0.9"/><rect x="288.68" y="269.58" width="2.4" height="10.67" fill="#000" stroke="#0e9e0e" stroke-width="0.7"/><line x1="293.27" y1="254.52" x2="293.27" y2="276.61" stroke="#14b414" stroke-width="0.9"/><rect x="292.07" y="258.52" width="2.4" height="11.09" fill="#000" stroke="#0e9e0e" stroke-width="0.7"/><line x1="296.66" y1="258.09" x2="296.66" y2="274.17" stroke="#14b414" stroke-width="0.9"/><rect x="295.66" y="259.09" width="2.0" height="10.08" fill="#c0f5b8"/><line x1="300.05" y1="261.98" x2="300.05" y2="277.68" stroke="#14b414" stroke-width="0.9"/><rect x="299.05" y="268.98" width="2.0" height="3.70" fill="#c0f5b8"/><line x1="303.44" y1="268.88" x2="303.44" y2="277.18" stroke="#14b414" stroke-width="0.9"/><rect x="302.44" y="272.88" width="2.0" height="0.80" fill="#c0f5b8"/><line x1="306.83" y1="265.76" x2="306.83" y2="274.29" stroke="#14b414" stroke-width="0.9"/><rect x="305.63" y="272.76" width="2.4" height="0.80" fill="#000" stroke="#0e9e0e" stroke-width="0.7"/><line x1="310.22" y1="261.43" x2="310.22" y2="274.29" stroke="#14b414" stroke-width="0.9"/><rect x="309.02" y="268.43" width="2.4" height="4.86" fill="#000" stroke="#0e9e0e" stroke-width="0.7"/><line x1="313.61" y1="246.03" x2="313.61" y2="271.68" stroke="#14b414" stroke-width="0.9"/><rect x="312.41" y="253.03" width="2.4" height="15.65" fill="#000" stroke="#0e9e0e" stroke-width="0.7"/><line x1="317.00" y1="241.21" x2="317.00" y2="253.99" stroke="#14b414" stroke-width="0.9"/><rect x="315.80" y="245.21" width="2.4" height="8.28" fill="#000" stroke="#0e9e0e" stroke-width="0.7"/><line x1="320.39" y1="232.99" x2="320.39" y2="252.04" stroke="#14b414" stroke-width="0.9"/><rect x="319.19" y="233.99" width="2.4" height="11.05" fill="#000" stroke="#0e9e0e" stroke-width="0.7"/><line x1="323.78" y1="220.99" x2="323.78" y2="236.31" stroke="#14b414" stroke-width="0.9"/><rect x="322.58" y="222.49" width="2.4" height="11.83" fill="#000" stroke="#0e9e0e" stroke-width="0.7"/><line x1="327.17" y1="210.44" x2="327.17" y2="223.99" stroke="#14b414" stroke-width="0.9"/><rect x="325.97" y="217.44" width="2.4" height="5.55" fill="#000" stroke="#0e9e0e" stroke-width="0.7"/><line x1="330.56" y1="209.56" x2="330.56" y2="218.82" stroke="#14b414" stroke-width="0.9"/><rect x="329.36" y="212.56" width="2.4" height="4.76" fill="#000" stroke="#0e9e0e" stroke-width="0.7"/><line x1="333.95" y1="210.00" x2="333.95" y2="224.17" stroke="#14b414" stroke-width="0.9"/><rect x="332.95" y="213.00" width="2.0" height="6.17" fill="#c0f5b8"/><line x1="337.34" y1="209.81" x2="337.34" y2="221.39" stroke="#14b414" stroke-width="0.9"/><rect x="336.14" y="214.81" width="2.4" height="4.58" fill="#000" stroke="#0e9e0e" stroke-width="0.7"/><line x1="340.73" y1="198.66" x2="340.73" y2="216.42" stroke="#14b414" stroke-width="0.9"/><rect x="339.53" y="200.66" width="2.4" height="13.76" fill="#000" stroke="#0e9e0e" stroke-width="0.7"/><line x1="344.12" y1="195.58" x2="344.12" y2="204.06" stroke="#14b414" stroke-width="0.9"/><rect x="342.92" y="197.08" width="2.4" height="3.98" fill="#000" stroke="#0e9e0e" stroke-width="0.7"/><line x1="347.51" y1="192.65" x2="347.51" y2="200.71" stroke="#14b414" stroke-width="0.9"/><rect x="346.51" y="196.65" width="2.0" height="0.80" fill="#c0f5b8"/><line x1="350.90" y1="196.44" x2="350.90" y2="208.29" stroke="#14b414" stroke-width="0.9"/><rect x="349.90" y="196.94" width="2.0" height="4.35" fill="#c0f5b8"/><line x1="354.29" y1="196.63" x2="354.29" y2="214.29" stroke="#14b414" stroke-width="0.9"/><rect x="353.29" y="201.63" width="2.0" height="7.66" fill="#c0f5b8"/><line x1="357.68" y1="203.81" x2="357.68" y2="222.96" stroke="#14b414" stroke-width="0.9"/><rect x="356.68" y="208.81" width="2.0" height="13.65" fill="#c0f5b8"/><line x1="361.07" y1="216.04" x2="361.07" y2="227.30" stroke="#14b414" stroke-width="0.9"/><rect x="360.07" y="223.04" width="2.0" height="2.76" fill="#c0f5b8"/><line x1="364.46" y1="224.92" x2="364.46" y2="228.47" stroke="#14b414" stroke-width="0.9"/><rect x="363.46" y="225.92" width="2.0" height="2.05" fill="#c0f5b8"/><line x1="367.85" y1="224.01" x2="367.85" y2="233.99" stroke="#14b414" stroke-width="0.9"/><rect x="366.85" y="228.01" width="2.0" height="5.48" fill="#c0f5b8"/><line x1="371.24" y1="228.14" x2="371.24" y2="237.41" stroke="#14b414" stroke-width="0.9"/><rect x="370.24" y="233.14" width="2.0" height="2.76" fill="#c0f5b8"/><line x1="374.63" y1="232.45" x2="374.63" y2="253.90" stroke="#14b414" stroke-width="0.9"/><rect x="373.63" y="236.45" width="2.0" height="10.45" fill="#c0f5b8"/><line x1="378.02" y1="240.32" x2="378.02" y2="256.51" stroke="#14b414" stroke-width="0.9"/><rect x="377.02" y="247.32" width="2.0" height="2.19" fill="#c0f5b8"/><line x1="381.41" y1="242.90" x2="381.41" y2="253.01" stroke="#14b414" stroke-width="0.9"/><rect x="380.21" y="243.90" width="2.4" height="5.11" fill="#000" stroke="#0e9e0e" stroke-width="0.7"/><line x1="384.80" y1="236.39" x2="384.80" y2="244.37" stroke="#14b414" stroke-width="0.9"/><rect x="383.60" y="237.89" width="2.4" height="5.98" fill="#000" stroke="#0e9e0e" stroke-width="0.7"/><line x1="388.19" y1="225.37" x2="388.19" y2="239.93" stroke="#14b414" stroke-width="0.9"/><rect x="386.99" y="229.37" width="2.4" height="9.06" fill="#000" stroke="#0e9e0e" stroke-width="0.7"/><line x1="391.58" y1="224.45" x2="391.58" y2="230.87" stroke="#14b414" stroke-width="0.9"/><rect x="390.38" y="227.45" width="2.4" height="2.42" fill="#000" stroke="#0e9e0e" stroke-width="0.7"/><line x1="394.97" y1="223.17" x2="394.97" y2="236.66" stroke="#14b414" stroke-width="0.9"/><rect x="393.97" y="227.17" width="2.0" height="8.00" fill="#c0f5b8"/><line x1="398.36" y1="230.83" x2="398.36" y2="237.17" stroke="#14b414" stroke-width="0.9"/><rect x="397.36" y="234.83" width="2.0" height="0.80" fill="#c0f5b8"/><line x1="401.75" y1="233.51" x2="401.75" y2="238.44" stroke="#14b414" stroke-width="0.9"/><rect x="400.75" y="235.51" width="2.0" height="0.93" fill="#c0f5b8"/><line x1="405.14" y1="234.73" x2="405.14" y2="239.20" stroke="#14b414" stroke-width="0.9"/><rect x="404.14" y="236.73" width="2.0" height="0.80" fill="#c0f5b8"/><line x1="408.53" y1="233.92" x2="408.53" y2="237.53" stroke="#14b414" stroke-width="0.9"/><rect x="407.33" y="234.42" width="2.4" height="2.61" fill="#000" stroke="#0e9e0e" stroke-width="0.7"/><line x1="411.92" y1="228.25" x2="411.92" y2="238.38" stroke="#14b414" stroke-width="0.9"/><rect x="410.72" y="230.25" width="2.4" height="4.14" fill="#000" stroke="#0e9e0e" stroke-width="0.7"/><line x1="415.31" y1="214.84" x2="415.31" y2="234.77" stroke="#14b414" stroke-width="0.9"/><rect x="414.11" y="218.84" width="2.4" height="11.94" fill="#000" stroke="#0e9e0e" stroke-width="0.7"/><line x1="418.70" y1="201.26" x2="418.70" y2="220.36" stroke="#14b414" stroke-width="0.9"/><rect x="417.50" y="208.26" width="2.4" height="10.10" fill="#000" stroke="#0e9e0e" stroke-width="0.7"/><line x1="422.09" y1="207.61" x2="422.09" y2="215.24" stroke="#14b414" stroke-width="0.9"/><rect x="420.89" y="208.11" width="2.4" height="0.80" fill="#000" stroke="#0e9e0e" stroke-width="0.7"/><line x1="425.48" y1="206.92" x2="425.48" y2="211.16" stroke="#14b414" stroke-width="0.9"/><rect x="424.48" y="207.92" width="2.0" height="2.24" fill="#c0f5b8"/><line x1="428.87" y1="206.58" x2="428.87" y2="217.50" stroke="#14b414" stroke-width="0.9"/><rect x="427.67" y="208.58" width="2.4" height="1.92" fill="#000" stroke="#0e9e0e" stroke-width="0.7"/><line x1="432.26" y1="204.50" x2="432.26" y2="212.10" stroke="#14b414" stroke-width="0.9"/><rect x="431.26" y="208.50" width="2.0" height="2.60" fill="#c0f5b8"/><line x1="435.65" y1="206.67" x2="435.65" y2="220.15" stroke="#14b414" stroke-width="0.9"/><rect x="434.65" y="211.67" width="2.0" height="1.48" fill="#c0f5b8"/><line x1="439.04" y1="211.35" x2="439.04" y2="215.19" stroke="#14b414" stroke-width="0.9"/><rect x="437.84" y="212.85" width="2.4" height="0.84" fill="#000" stroke="#0e9e0e" stroke-width="0.7"/><line x1="442.43" y1="200.43" x2="442.43" y2="213.78" stroke="#14b414" stroke-width="0.9"/><rect x="441.23" y="207.43" width="2.4" height="4.85" fill="#000" stroke="#0e9e0e" stroke-width="0.7"/><line x1="445.82" y1="193.06" x2="445.82" y2="211.55" stroke="#14b414" stroke-width="0.9"/><rect x="444.62" y="200.06" width="2.4" height="7.49" fill="#000" stroke="#0e9e0e" stroke-width="0.7"/><line x1="449.21" y1="198.83" x2="449.21" y2="200.61" stroke="#14b414" stroke-width="0.9"/><rect x="448.01" y="199.33" width="2.4" height="0.80" fill="#000" stroke="#0e9e0e" stroke-width="0.7"/><line x1="452.60" y1="197.56" x2="452.60" y2="201.10" stroke="#14b414" stroke-width="0.9"/><rect x="451.40" y="198.56" width="2.4" height="1.04" fill="#000" stroke="#0e9e0e" stroke-width="0.7"/><line x1="455.99" y1="186.12" x2="455.99" y2="199.50" stroke="#14b414" stroke-width="0.9"/><rect x="454.79" y="188.12" width="2.4" height="10.88" fill="#000" stroke="#0e9e0e" stroke-width="0.7"/><line x1="459.38" y1="176.05" x2="459.38" y2="191.87" stroke="#14b414" stroke-width="0.9"/><rect x="458.18" y="178.05" width="2.4" height="9.82" fill="#000" stroke="#0e9e0e" stroke-width="0.7"/><line x1="462.77" y1="166.43" x2="462.77" y2="178.45" stroke="#14b414" stroke-width="0.9"/><rect x="461.57" y="167.93" width="2.4" height="10.02" fill="#000" stroke="#0e9e0e" stroke-width="0.7"/><line x1="466.16" y1="156.35" x2="466.16" y2="172.76" stroke="#14b414" stroke-width="0.9"/><rect x="464.96" y="163.35" width="2.4" height="4.40" fill="#000" stroke="#0e9e0e" stroke-width="0.7"/><line x1="469.55" y1="162.31" x2="469.55" y2="170.17" stroke="#14b414" stroke-width="0.9"/><rect x="468.55" y="163.81" width="2.0" height="4.86" fill="#c0f5b8"/><line x1="472.94" y1="161.09" x2="472.94" y2="181.82" stroke="#14b414" stroke-width="0.9"/><rect x="471.94" y="168.09" width="2.0" height="12.23" fill="#c0f5b8"/><line x1="476.33" y1="179.15" x2="476.33" y2="187.79" stroke="#14b414" stroke-width="0.9"/><rect x="475.33" y="180.65" width="2.0" height="5.64" fill="#c0f5b8"/><line x1="479.72" y1="183.44" x2="479.72" y2="186.93" stroke="#14b414" stroke-width="0.9"/><rect x="478.52" y="184.44" width="2.4" height="2.00" fill="#000" stroke="#0e9e0e" stroke-width="0.7"/><line x1="483.11" y1="177.46" x2="483.11" y2="187.67" stroke="#14b414" stroke-width="0.9"/><rect x="482.11" y="184.46" width="2.0" height="2.21" fill="#c0f5b8"/><line x1="486.50" y1="184.14" x2="486.50" y2="193.18" stroke="#14b414" stroke-width="0.9"/><rect x="485.50" y="186.14" width="2.0" height="4.04" fill="#c0f5b8"/><line x1="489.89" y1="180.72" x2="489.89" y2="190.20" stroke="#14b414" stroke-width="0.9"/><rect x="488.69" y="187.72" width="2.4" height="1.98" fill="#000" stroke="#0e9e0e" stroke-width="0.7"/><line x1="493.28" y1="181.21" x2="493.28" y2="213.13" stroke="#14b414" stroke-width="0.9"/><rect x="492.28" y="188.21" width="2.0" height="20.91" fill="#c0f5b8"/><line x1="496.67" y1="207.13" x2="496.67" y2="228.34" stroke="#14b414" stroke-width="0.9"/><rect x="495.67" y="209.13" width="2.0" height="16.21" fill="#c0f5b8"/><line x1="500.06" y1="218.38" x2="500.06" y2="247.04" stroke="#14b414" stroke-width="0.9"/><rect x="499.06" y="225.38" width="2.0" height="19.65" fill="#c0f5b8"/><line x1="503.45" y1="238.81" x2="503.45" y2="247.49" stroke="#14b414" stroke-width="0.9"/><rect x="502.25" y="241.81" width="2.4" height="3.67" fill="#000" stroke="#0e9e0e" stroke-width="0.7"/><line x1="506.84" y1="236.31" x2="506.84" y2="246.38" stroke="#14b414" stroke-width="0.9"/><rect x="505.64" y="237.31" width="2.4" height="4.07" fill="#000" stroke="#0e9e0e" stroke-width="0.7"/><line x1="510.23" y1="232.50" x2="510.23" y2="241.79" stroke="#14b414" stroke-width="0.9"/><rect x="509.03" y="234.50" width="2.4" height="2.30" fill="#000" stroke="#0e9e0e" stroke-width="0.7"/><line x1="513.62" y1="233.70" x2="513.62" y2="241.02" stroke="#14b414" stroke-width="0.9"/><rect x="512.62" y="234.70" width="2.0" height="4.82" fill="#c0f5b8"/><line x1="517.01" y1="235.69" x2="517.01" y2="261.80" stroke="#14b414" stroke-width="0.9"/><rect x="516.01" y="239.69" width="2.0" height="20.61" fill="#c0f5b8"/><line x1="520.40" y1="248.09" x2="520.40" y2="261.87" stroke="#14b414" stroke-width="0.9"/><rect x="519.20" y="255.09" width="2.4" height="4.77" fill="#000" stroke="#0e9e0e" stroke-width="0.7"/><line x1="523.79" y1="247.60" x2="523.79" y2="258.24" stroke="#14b414" stroke-width="0.9"/><rect x="522.79" y="254.60" width="2.0" height="2.14" fill="#c0f5b8"/><line x1="527.18" y1="255.64" x2="527.18" y2="266.13" stroke="#14b414" stroke-width="0.9"/><rect x="526.18" y="257.14" width="2.0" height="3.99" fill="#c0f5b8"/><line x1="530.57" y1="256.02" x2="530.57" y2="264.26" stroke="#14b414" stroke-width="0.9"/><rect x="529.57" y="261.02" width="2.0" height="1.24" fill="#c0f5b8"/><line x1="533.96" y1="254.43" x2="533.96" y2="262.27" stroke="#14b414" stroke-width="0.9"/><rect x="532.76" y="258.43" width="2.4" height="3.34" fill="#000" stroke="#0e9e0e" stroke-width="0.7"/><line x1="537.35" y1="257.88" x2="537.35" y2="277.05" stroke="#14b414" stroke-width="0.9"/><rect x="536.35" y="258.38" width="2.0" height="13.67" fill="#c0f5b8"/><line x1="540.74" y1="271.20" x2="540.74" y2="287.80" stroke="#14b414" stroke-width="0.9"/><rect x="539.74" y="272.20" width="2.0" height="14.60" fill="#c0f5b8"/><line x1="544.13" y1="286.15" x2="544.13" y2="290.40" stroke="#14b414" stroke-width="0.9"/><rect x="543.13" y="287.15" width="2.0" height="2.26" fill="#c0f5b8"/><line x1="547.52" y1="282.48" x2="547.52" y2="291.85" stroke="#14b414" stroke-width="0.9"/><rect x="546.32" y="283.98" width="2.4" height="4.87" fill="#000" stroke="#0e9e0e" stroke-width="0.7"/><line x1="550.91" y1="279.62" x2="550.91" y2="289.36" stroke="#14b414" stroke-width="0.9"/><rect x="549.71" y="282.62" width="2.4" height="1.74" fill="#000" stroke="#0e9e0e" stroke-width="0.7"/><line x1="554.30" y1="274.15" x2="554.30" y2="287.13" stroke="#14b414" stroke-width="0.9"/><rect x="553.10" y="281.15" width="2.4" height="1.97" fill="#000" stroke="#0e9e0e" stroke-width="0.7"/><line x1="557.69" y1="279.12" x2="557.69" y2="298.27" stroke="#14b414" stroke-width="0.9"/><rect x="556.69" y="280.62" width="2.0" height="12.65" fill="#c0f5b8"/><line x1="561.08" y1="292.49" x2="561.08" y2="315.27" stroke="#14b414" stroke-width="0.9"/><rect x="560.08" y="292.99" width="2.0" height="21.28" fill="#c0f5b8"/><line x1="564.47" y1="311.77" x2="564.47" y2="317.34" stroke="#14b414" stroke-width="0.9"/><rect x="563.47" y="313.77" width="2.0" height="2.57" fill="#c0f5b8"/><line x1="567.86" y1="312.03" x2="567.86" y2="319.88" stroke="#14b414" stroke-width="0.9"/><rect x="566.66" y="312.53" width="2.4" height="3.35" fill="#000" stroke="#0e9e0e" stroke-width="0.7"/><line x1="571.25" y1="309.43" x2="571.25" y2="317.35" stroke="#14b414" stroke-width="0.9"/><rect x="570.25" y="312.43" width="2.0" height="3.42" fill="#c0f5b8"/><line x1="574.64" y1="308.53" x2="574.64" y2="317.61" stroke="#14b414" stroke-width="0.9"/><rect x="573.44" y="309.53" width="2.4" height="6.58" fill="#000" stroke="#0e9e0e" stroke-width="0.7"/><line x1="578.03" y1="306.14" x2="578.03" y2="316.26" stroke="#14b414" stroke-width="0.9"/><rect x="577.03" y="309.14" width="2.0" height="4.12" fill="#c0f5b8"/><line x1="581.42" y1="305.91" x2="581.42" y2="323.27" stroke="#14b414" stroke-width="0.9"/><rect x="580.42" y="312.91" width="2.0" height="8.86" fill="#c0f5b8"/><line x1="584.81" y1="319.14" x2="584.81" y2="332.64" stroke="#14b414" stroke-width="0.9"/><rect x="583.81" y="322.14" width="2.0" height="10.00" fill="#c0f5b8"/><line x1="588.20" y1="329.64" x2="588.20" y2="339.42" stroke="#14b414" stroke-width="0.9"/><rect x="587.00" y="331.64" width="2.4" height="0.80" fill="#000" stroke="#0e9e0e" stroke-width="0.7"/><line x1="591.59" y1="326.57" x2="591.59" y2="340.66" stroke="#14b414" stroke-width="0.9"/><rect x="590.59" y="331.57" width="2.0" height="2.08" fill="#c0f5b8"/><line x1="594.98" y1="322.17" x2="594.98" y2="336.12" stroke="#14b414" stroke-width="0.9"/><rect x="593.78" y="325.17" width="2.4" height="8.96" fill="#000" stroke="#0e9e0e" stroke-width="0.7"/><line x1="598.37" y1="318.21" x2="598.37" y2="329.98" stroke="#14b414" stroke-width="0.9"/><rect x="597.17" y="319.71" width="2.4" height="5.27" fill="#000" stroke="#0e9e0e" stroke-width="0.7"/><line x1="601.76" y1="297.87" x2="601.76" y2="320.78" stroke="#14b414" stroke-width="0.9"/><rect x="600.56" y="299.37" width="2.4" height="20.92" fill="#000" stroke="#0e9e0e" stroke-width="0.7"/><line x1="605.15" y1="296.66" x2="605.15" y2="319.42" stroke="#14b414" stroke-width="0.9"/><rect x="604.15" y="299.66" width="2.0" height="14.76" fill="#c0f5b8"/><line x1="608.54" y1="308.92" x2="608.54" y2="320.83" stroke="#14b414" stroke-width="0.9"/><rect x="607.54" y="313.92" width="2.0" height="3.91" fill="#c0f5b8"/><line x1="611.93" y1="317.57" x2="611.93" y2="330.03" stroke="#14b414" stroke-width="0.9"/><rect x="610.93" y="318.07" width="2.0" height="4.97" fill="#c0f5b8"/><line x1="615.32" y1="322.25" x2="615.32" y2="332.54" stroke="#14b414" stroke-width="0.9"/><rect x="614.32" y="322.75" width="2.0" height="6.78" fill="#c0f5b8"/><line x1="618.71" y1="325.33" x2="618.71" y2="348.22" stroke="#14b414" stroke-width="0.9"/><rect x="617.71" y="329.33" width="2.0" height="16.89" fill="#c0f5b8"/><line x1="622.10" y1="338.49" x2="622.10" y2="350.68" stroke="#14b414" stroke-width="0.9"/><rect x="620.90" y="340.49" width="2.4" height="6.19" fill="#000" stroke="#0e9e0e" stroke-width="0.7"/><line x1="625.49" y1="334.80" x2="625.49" y2="347.29" stroke="#14b414" stroke-width="0.9"/><rect x="624.29" y="335.80" width="2.4" height="4.49" fill="#000" stroke="#0e9e0e" stroke-width="0.7"/><line x1="628.88" y1="331.35" x2="628.88" y2="336.49" stroke="#14b414" stroke-width="0.9"/><rect x="627.68" y="333.35" width="2.4" height="2.64" fill="#000" stroke="#0e9e0e" stroke-width="0.7"/><line x1="632.27" y1="330.53" x2="632.27" y2="338.73" stroke="#14b414" stroke-width="0.9"/><rect x="631.07" y="332.03" width="2.4" height="1.70" fill="#000" stroke="#0e9e0e" stroke-width="0.7"/><line x1="635.66" y1="328.90" x2="635.66" y2="336.36" stroke="#14b414" stroke-width="0.9"/><rect x="634.66" y="331.90" width="2.0" height="1.46" fill="#c0f5b8"/><line x1="639.05" y1="331.36" x2="639.05" y2="340.52" stroke="#14b414" stroke-width="0.9"/><rect x="638.05" y="332.86" width="2.0" height="2.66" fill="#c0f5b8"/><line x1="642.44" y1="328.79" x2="642.44" y2="350.09" stroke="#14b414" stroke-width="0.9"/><rect x="641.44" y="335.79" width="2.0" height="12.81" fill="#c0f5b8"/><line x1="645.83" y1="337.02" x2="645.83" y2="349.23" stroke="#14b414" stroke-width="0.9"/><rect x="644.63" y="338.52" width="2.4" height="10.21" fill="#000" stroke="#0e9e0e" stroke-width="0.7"/><line x1="649.22" y1="331.38" x2="649.22" y2="340.28" stroke="#14b414" stroke-width="0.9"/><rect x="648.02" y="336.38" width="2.4" height="2.40" fill="#000" stroke="#0e9e0e" stroke-width="0.7"/><line x1="652.61" y1="330.49" x2="652.61" y2="338.69" stroke="#14b414" stroke-width="0.9"/><rect x="651.41" y="330.99" width="2.4" height="5.70" fill="#000" stroke="#0e9e0e" stroke-width="0.7"/><line x1="656.00" y1="311.16" x2="656.00" y2="331.44" stroke="#14b414" stroke-width="0.9"/><rect x="654.80" y="315.16" width="2.4" height="15.28" fill="#000" stroke="#0e9e0e" stroke-width="0.7"/><line x1="659.39" y1="314.60" x2="659.39" y2="326.39" stroke="#14b414" stroke-width="0.9"/><rect x="658.39" y="315.10" width="2.0" height="10.79" fill="#c0f5b8"/><line x1="662.78" y1="312.42" x2="662.78" y2="329.10" stroke="#14b414" stroke-width="0.9"/><rect x="661.58" y="319.42" width="2.4" height="6.69" fill="#000" stroke="#0e9e0e" stroke-width="0.7"/><line x1="666.17" y1="310.82" x2="666.17" y2="320.78" stroke="#14b414" stroke-width="0.9"/><rect x="664.97" y="311.82" width="2.4" height="7.96" fill="#000" stroke="#0e9e0e" stroke-width="0.7"/><line x1="669.56" y1="310.79" x2="669.56" y2="316.68" stroke="#14b414" stroke-width="0.9"/><rect x="668.56" y="311.79" width="2.0" height="1.89" fill="#c0f5b8"/><line x1="672.95" y1="311.99" x2="672.95" y2="321.50" stroke="#14b414" stroke-width="0.9"/><rect x="671.95" y="313.99" width="2.0" height="0.80" fill="#c0f5b8"/><line x1="676.34" y1="307.36" x2="676.34" y2="320.66" stroke="#14b414" stroke-width="0.9"/><rect x="675.34" y="314.36" width="2.0" height="3.30" fill="#c0f5b8"/><line x1="679.73" y1="309.09" x2="679.73" y2="318.80" stroke="#14b414" stroke-width="0.9"/><rect x="678.53" y="311.09" width="2.4" height="6.71" fill="#000" stroke="#0e9e0e" stroke-width="0.7"/><line x1="683.12" y1="307.88" x2="683.12" y2="323.46" stroke="#14b414" stroke-width="0.9"/><rect x="682.12" y="310.88" width="2.0" height="11.08" fill="#c0f5b8"/><line x1="686.51" y1="250.96" x2="686.51" y2="322.43" stroke="#14b414" stroke-width="0.9"/><rect x="685.31" y="253.96" width="2.4" height="67.47" fill="#000" stroke="#0e9e0e" stroke-width="0.7"/><line x1="689.90" y1="239.07" x2="689.90" y2="257.17" stroke="#14b414" stroke-width="0.9"/><rect x="688.70" y="242.07" width="2.4" height="12.10" fill="#000" stroke="#0e9e0e" stroke-width="0.7"/><line x1="693.29" y1="239.92" x2="693.29" y2="244.03" stroke="#14b414" stroke-width="0.9"/><rect x="692.09" y="240.92" width="2.4" height="1.11" fill="#000" stroke="#0e9e0e" stroke-width="0.7"/><line x1="696.68" y1="228.40" x2="696.68" y2="240.93" stroke="#14b414" stroke-width="0.9"/><rect x="695.48" y="235.40" width="2.4" height="5.03" fill="#000" stroke="#0e9e0e" stroke-width="0.7"/><line x1="700.07" y1="199.53" x2="700.07" y2="237.89" stroke="#14b414" stroke-width="0.9"/><rect x="698.87" y="206.53" width="2.4" height="28.36" fill="#000" stroke="#0e9e0e" stroke-width="0.7"/><line x1="703.46" y1="165.62" x2="703.46" y2="208.03" stroke="#14b414" stroke-width="0.9"/><rect x="702.26" y="167.62" width="2.4" height="39.41" fill="#000" stroke="#0e9e0e" stroke-width="0.7"/><line x1="706.85" y1="164.19" x2="706.85" y2="175.24" stroke="#14b414" stroke-width="0.9"/><rect x="705.85" y="167.19" width="2.0" height="4.05" fill="#c0f5b8"/><line x1="710.24" y1="168.63" x2="710.24" y2="175.48" stroke="#14b414" stroke-width="0.9"/><rect x="709.24" y="171.63" width="2.0" height="2.86" fill="#c0f5b8"/><line x1="713.63" y1="161.57" x2="713.63" y2="179.16" stroke="#14b414" stroke-width="0.9"/><rect x="712.43" y="168.57" width="2.4" height="5.59" fill="#000" stroke="#0e9e0e" stroke-width="0.7"/><line x1="717.02" y1="160.98" x2="717.02" y2="203.95" stroke="#14b414" stroke-width="0.9"/><rect x="716.02" y="167.98" width="2.0" height="28.97" fill="#c0f5b8"/><line x1="720.41" y1="192.22" x2="720.41" y2="231.19" stroke="#14b414" stroke-width="0.9"/><rect x="719.41" y="197.22" width="2.0" height="29.97" fill="#c0f5b8"/><line x1="723.80" y1="222.74" x2="723.80" y2="232.45" stroke="#14b414" stroke-width="0.9"/><rect x="722.80" y="226.74" width="2.0" height="5.21" fill="#c0f5b8"/><line x1="727.19" y1="226.76" x2="727.19" y2="241.47" stroke="#14b414" stroke-width="0.9"/><rect x="726.19" y="231.76" width="2.0" height="8.72" fill="#c0f5b8"/><line x1="730.58" y1="232.14" x2="730.58" y2="243.11" stroke="#14b414" stroke-width="0.9"/><rect x="729.38" y="232.64" width="2.4" height="7.46" fill="#000" stroke="#0e9e0e" stroke-width="0.7"/><line x1="733.97" y1="221.38" x2="733.97" y2="233.12" stroke="#14b414" stroke-width="0.9"/><rect x="732.77" y="226.38" width="2.4" height="5.74" fill="#000" stroke="#0e9e0e" stroke-width="0.7"/><line x1="737.36" y1="219.38" x2="737.36" y2="226.80" stroke="#14b414" stroke-width="0.9"/><rect x="736.16" y="222.38" width="2.4" height="3.92" fill="#000" stroke="#0e9e0e" stroke-width="0.7"/><line x1="740.75" y1="218.43" x2="740.75" y2="223.34" stroke="#14b414" stroke-width="0.9"/><rect x="739.55" y="221.43" width="2.4" height="0.80" fill="#000" stroke="#0e9e0e" stroke-width="0.7"/><line x1="744.14" y1="217.15" x2="744.14" y2="223.37" stroke="#14b414" stroke-width="0.9"/><rect x="743.14" y="221.15" width="2.0" height="0.80" fill="#c0f5b8"/><line x1="747.53" y1="216.71" x2="747.53" y2="223.51" stroke="#14b414" stroke-width="0.9"/><rect x="746.53" y="221.71" width="2.0" height="1.30" fill="#c0f5b8"/><line x1="750.92" y1="221.16" x2="750.92" y2="228.75" stroke="#14b414" stroke-width="0.9"/><rect x="749.92" y="223.16" width="2.0" height="4.58" fill="#c0f5b8"/><line x1="754.31" y1="212.23" x2="754.31" y2="229.53" stroke="#14b414" stroke-width="0.9"/><rect x="753.11" y="219.23" width="2.4" height="8.79" fill="#000" stroke="#0e9e0e" stroke-width="0.7"/><line x1="757.70" y1="205.59" x2="757.70" y2="220.48" stroke="#14b414" stroke-width="0.9"/><rect x="756.50" y="206.09" width="2.4" height="12.89" fill="#000" stroke="#0e9e0e" stroke-width="0.7"/><line x1="761.09" y1="182.95" x2="761.09" y2="208.98" stroke="#14b414" stroke-width="0.9"/><rect x="759.89" y="185.95" width="2.4" height="20.04" fill="#000" stroke="#0e9e0e" stroke-width="0.7"/><line x1="764.48" y1="176.02" x2="764.48" y2="191.23" stroke="#14b414" stroke-width="0.9"/><rect x="763.28" y="179.02" width="2.4" height="7.21" fill="#000" stroke="#0e9e0e" stroke-width="0.7"/><line x1="767.87" y1="173.78" x2="767.87" y2="185.33" stroke="#14b414" stroke-width="0.9"/><rect x="766.87" y="178.78" width="2.0" height="5.55" fill="#c0f5b8"/><line x1="771.26" y1="181.92" x2="771.26" y2="191.35" stroke="#14b414" stroke-width="0.9"/><rect x="770.26" y="183.92" width="2.0" height="0.80" fill="#c0f5b8"/><line x1="774.65" y1="180.29" x2="774.65" y2="196.76" stroke="#14b414" stroke-width="0.9"/><rect x="773.65" y="184.29" width="2.0" height="5.47" fill="#c0f5b8"/><line x1="778.04" y1="187.81" x2="778.04" y2="192.44" stroke="#14b414" stroke-width="0.9"/><rect x="777.04" y="189.81" width="2.0" height="1.63" fill="#c0f5b8"/><line x1="781.43" y1="187.51" x2="781.43" y2="194.23" stroke="#14b414" stroke-width="0.9"/><rect x="780.43" y="191.51" width="2.0" height="0.80" fill="#c0f5b8"/><line x1="784.82" y1="190.61" x2="784.82" y2="196.86" stroke="#14b414" stroke-width="0.9"/><rect x="783.82" y="192.61" width="2.0" height="3.75" fill="#c0f5b8"/><line x1="788.21" y1="191.25" x2="788.21" y2="203.49" stroke="#14b414" stroke-width="0.9"/><rect x="787.21" y="196.25" width="2.0" height="5.23" fill="#c0f5b8"/><line x1="791.60" y1="200.79" x2="791.60" y2="209.28" stroke="#14b414" stroke-width="0.9"/><rect x="790.60" y="201.29" width="2.0" height="0.99" fill="#c0f5b8"/><line x1="794.99" y1="201.34" x2="794.99" y2="206.12" stroke="#14b414" stroke-width="0.9"/><rect x="793.99" y="202.84" width="2.0" height="1.28" fill="#c0f5b8"/><line x1="798.38" y1="199.59" x2="798.38" y2="210.50" stroke="#14b414" stroke-width="0.9"/><rect x="797.38" y="204.59" width="2.0" height="0.91" fill="#c0f5b8"/><line x1="801.77" y1="164.70" x2="801.77" y2="205.92" stroke="#14b414" stroke-width="0.9"/><rect x="800.57" y="167.70" width="2.4" height="37.72" fill="#000" stroke="#0e9e0e" stroke-width="0.7"/><line x1="805.16" y1="160.61" x2="805.16" y2="177.15" stroke="#14b414" stroke-width="0.9"/><rect x="804.16" y="167.61" width="2.0" height="2.54" fill="#c0f5b8"/><line x1="808.55" y1="158.58" x2="808.55" y2="177.02" stroke="#14b414" stroke-width="0.9"/><rect x="807.35" y="165.58" width="2.4" height="4.44" fill="#000" stroke="#0e9e0e" stroke-width="0.7"/><line x1="811.94" y1="160.58" x2="811.94" y2="166.61" stroke="#14b414" stroke-width="0.9"/><rect x="810.74" y="162.08" width="2.4" height="3.03" fill="#000" stroke="#0e9e0e" stroke-width="0.7"/><line x1="815.33" y1="155.30" x2="815.33" y2="167.64" stroke="#14b414" stroke-width="0.9"/><rect x="814.33" y="162.30" width="2.0" height="4.34" fill="#c0f5b8"/><line x1="818.72" y1="160.77" x2="818.72" y2="168.09" stroke="#14b414" stroke-width="0.9"/><rect x="817.52" y="162.27" width="2.4" height="3.82" fill="#000" stroke="#0e9e0e" stroke-width="0.7"/><line x1="822.11" y1="156.30" x2="822.11" y2="163.21" stroke="#14b414" stroke-width="0.9"/><rect x="820.91" y="159.30" width="2.4" height="2.41" fill="#000" stroke="#0e9e0e" stroke-width="0.7"/><line x1="825.50" y1="152.29" x2="825.50" y2="160.34" stroke="#14b414" stroke-width="0.9"/><rect x="824.30" y="157.29" width="2.4" height="2.05" fill="#000" stroke="#0e9e0e" stroke-width="0.7"/><line x1="828.89" y1="153.22" x2="828.89" y2="162.05" stroke="#14b414" stroke-width="0.9"/><rect x="827.69" y="155.22" width="2.4" height="1.84" fill="#000" stroke="#0e9e0e" stroke-width="0.7"/><line x1="832.28" y1="150.81" x2="832.28" y2="156.06" stroke="#14b414" stroke-width="0.9"/><rect x="831.08" y="151.31" width="2.4" height="4.26" fill="#000" stroke="#0e9e0e" stroke-width="0.7"/><line x1="835.67" y1="148.90" x2="835.67" y2="157.21" stroke="#14b414" stroke-width="0.9"/><rect x="834.67" y="151.90" width="2.0" height="1.31" fill="#c0f5b8"/><line x1="839.06" y1="146.67" x2="839.06" y2="158.91" stroke="#14b414" stroke-width="0.9"/><rect x="838.06" y="153.67" width="2.0" height="3.24" fill="#c0f5b8"/><line x1="842.45" y1="145.94" x2="842.45" y2="159.34" stroke="#14b414" stroke-width="0.9"/><rect x="841.25" y="150.94" width="2.4" height="5.40" fill="#000" stroke="#0e9e0e" stroke-width="0.7"/><line x1="845.84" y1="137.14" x2="845.84" y2="151.57" stroke="#14b414" stroke-width="0.9"/><rect x="844.64" y="142.14" width="2.4" height="8.44" fill="#000" stroke="#0e9e0e" stroke-width="0.7"/><line x1="849.23" y1="132.92" x2="849.23" y2="144.34" stroke="#14b414" stroke-width="0.9"/><rect x="848.03" y="136.92" width="2.4" height="5.42" fill="#000" stroke="#0e9e0e" stroke-width="0.7"/><line x1="852.62" y1="132.16" x2="852.62" y2="143.60" stroke="#14b414" stroke-width="0.9"/><rect x="851.62" y="137.16" width="2.0" height="2.45" fill="#c0f5b8"/><line x1="856.01" y1="135.23" x2="856.01" y2="140.24" stroke="#14b414" stroke-width="0.9"/><rect x="854.81" y="138.23" width="2.4" height="1.01" fill="#000" stroke="#0e9e0e" stroke-width="0.7"/><line x1="859.40" y1="126.24" x2="859.40" y2="140.80" stroke="#14b414" stroke-width="0.9"/><rect x="858.20" y="129.24" width="2.4" height="9.56" fill="#000" stroke="#0e9e0e" stroke-width="0.7"/><line x1="862.79" y1="113.94" x2="862.79" y2="129.91" stroke="#14b414" stroke-width="0.9"/><rect x="861.59" y="116.94" width="2.4" height="11.97" fill="#000" stroke="#0e9e0e" stroke-width="0.7"/><line x1="866.18" y1="98.16" x2="866.18" y2="118.93" stroke="#14b414" stroke-width="0.9"/><rect x="864.98" y="99.66" width="2.4" height="17.27" fill="#000" stroke="#0e9e0e" stroke-width="0.7"/><line x1="869.57" y1="89.50" x2="869.57" y2="101.66" stroke="#14b414" stroke-width="0.9"/><rect x="868.37" y="90.00" width="2.4" height="10.15" fill="#000" stroke="#0e9e0e" stroke-width="0.7"/><line x1="872.96" y1="88.21" x2="872.96" y2="90.97" stroke="#14b414" stroke-width="0.9"/><rect x="871.76" y="88.71" width="2.4" height="0.80" fill="#000" stroke="#0e9e0e" stroke-width="0.7"/><line x1="876.35" y1="85.38" x2="876.35" y2="93.96" stroke="#14b414" stroke-width="0.9"/><rect x="875.15" y="86.88" width="2.4" height="2.08" fill="#000" stroke="#0e9e0e" stroke-width="0.7"/><line x1="879.74" y1="71.75" x2="879.74" y2="88.14" stroke="#14b414" stroke-width="0.9"/><rect x="878.54" y="75.75" width="2.4" height="11.39" fill="#000" stroke="#0e9e0e" stroke-width="0.7"/><line x1="883.13" y1="72.26" x2="883.13" y2="108.59" stroke="#14b414" stroke-width="0.9"/><rect x="882.13" y="76.26" width="2.0" height="30.32" fill="#c0f5b8"/><line x1="886.52" y1="100.11" x2="886.52" y2="118.92" stroke="#14b414" stroke-width="0.9"/><rect x="885.52" y="107.11" width="2.0" height="11.31" fill="#c0f5b8"/><line x1="889.91" y1="114.69" x2="889.91" y2="125.61" stroke="#14b414" stroke-width="0.9"/><rect x="888.91" y="118.69" width="2.0" height="2.92" fill="#c0f5b8"/><line x1="893.30" y1="110.90" x2="893.30" y2="124.14" stroke="#14b414" stroke-width="0.9"/><rect x="892.10" y="111.90" width="2.4" height="9.24" fill="#000" stroke="#0e9e0e" stroke-width="0.7"/><line x1="896.69" y1="110.80" x2="896.69" y2="123.31" stroke="#14b414" stroke-width="0.9"/><rect x="895.69" y="111.80" width="2.0" height="9.51" fill="#c0f5b8"/><line x1="900.08" y1="111.80" x2="900.08" y2="126.64" stroke="#14b414" stroke-width="0.9"/><rect x="898.88" y="114.80" width="2.4" height="6.83" fill="#000" stroke="#0e9e0e" stroke-width="0.7"/><line x1="903.47" y1="113.05" x2="903.47" y2="121.13" stroke="#14b414" stroke-width="0.9"/><rect x="902.47" y="115.05" width="2.0" height="2.08" fill="#c0f5b8"/><line x1="906.86" y1="113.06" x2="906.86" y2="135.12" stroke="#14b414" stroke-width="0.9"/><rect x="905.86" y="117.06" width="2.0" height="14.06" fill="#c0f5b8"/><line x1="910.25" y1="124.40" x2="910.25" y2="142.70" stroke="#14b414" stroke-width="0.9"/><rect x="909.25" y="131.40" width="2.0" height="10.80" fill="#c0f5b8"/><path fill="none" stroke="#8a1414" stroke-width="1" d="M250.0,382.0 C252.8,375.0 261.4,353.8 266.6,340.0 C271.8,326.2 276.9,308.8 281.0,299.5 C285.1,290.2 287.6,288.6 291.0,284.2 C294.4,279.8 296.2,276.9 301.3,273.0 C306.4,269.1 314.7,266.9 321.8,260.7 C328.9,254.5 338.1,242.9 344.0,236.0 C349.9,229.1 353.9,222.3 357.4,219.0 C360.9,215.7 361.1,216.0 364.8,216.0 C368.5,216.0 375.7,217.2 379.7,219.0 C383.7,220.8 385.1,224.2 388.6,226.5 C392.1,228.8 394.5,232.8 400.5,233.0 C406.5,233.2 417.8,230.2 424.5,228.0 C431.2,225.8 435.5,224.6 441.0,219.8 C446.5,215.0 451.9,204.4 457.3,199.3 C462.7,194.2 467.8,191.1 473.6,189.0 C479.4,186.9 486.5,184.2 492.0,187.0 C497.5,189.8 501.3,199.0 506.4,205.5 C511.5,212.0 517.3,217.8 522.7,226.0 C528.1,234.2 533.5,247.1 539.0,254.6 C544.5,262.1 550.0,265.6 555.5,271.0 C561.0,276.4 566.7,282.0 571.8,287.3 C576.9,292.6 580.2,297.3 586.0,302.6 C591.8,307.9 600.6,315.3 606.8,319.0 C613.0,322.7 616.9,323.3 623.0,325.0 C629.1,326.7 637.9,327.5 643.6,329.0 C649.3,330.5 653.4,333.5 657.0,334.0 C660.6,334.5 661.0,333.8 665.0,332.0 C669.0,330.2 676.8,327.2 681.0,323.0 C685.2,318.8 687.3,312.5 690.0,307.0 C692.7,301.5 694.5,296.5 697.0,290.0 C699.5,283.5 701.5,277.3 705.0,268.0 C708.5,258.7 714.5,242.5 718.3,234.0 C722.1,225.5 724.4,221.0 728.0,217.0 C731.6,213.0 736.8,211.2 740.0,210.0 C743.2,208.8 744.5,208.0 747.3,210.0 C750.1,212.0 753.2,221.5 757.0,222.0 C760.8,222.5 766.2,216.0 770.0,213.0 C773.8,210.0 774.4,208.3 780.0,204.0 C785.6,199.7 795.7,192.6 803.5,187.0 C811.3,181.4 819.2,176.1 827.0,170.5 C834.8,164.9 843.7,159.3 850.4,153.7 C857.1,148.1 862.6,142.0 867.0,137.0 C871.4,132.0 873.7,127.5 877.0,123.6 C880.3,119.7 883.7,115.9 887.0,113.6 C890.3,111.3 893.2,110.6 897.0,110.0 C900.8,109.4 907.5,110.0 909.6,110.0"/><line x1="240.5" y1="142.3" x2="919.6" y2="142.3" stroke="#8a8a8a" stroke-width="0.8"/><rect x="919.9" y="138.8" width="26.2" height="7" fill="#fff"/><text transform="matrix(1,0,0,1.22,922.3,144.8)" font-size="6" fill="#111" font-family="Liberation Sans">1.10339</text><path d="M243 53.5h3.6l-1.8 2.2z" fill="#fff"/><text transform="matrix(1,0,0,1.22,250.6,58.2)" font-size="6" fill="#e8e8e8" font-family="Liberation Sans">EURUSD,H4  1.10631 1.10631 1.10331 1.10339</text><rect x="948.8" y="48.8" width="1.2" height="358" fill="#c8c8c8"/></svg>
<div class="b" style="left:239.5px;top:407.8px;width:710.5px;height:15.5px;background:#f0f0f0"></div>
<div class="b" style="left:239.5px;top:407.8px;width:60px;height:14.5px;background:#fff;border:1px solid #9a9a9a;border-top:none"></div>
<div class="t" style="left:244px;top:406.00px;font-size:8px;line-height:16px;color:#222;">EURUSD,H4</div>
<div class="t" style="left:305px;top:406.00px;font-size:8px;line-height:16px;color:#aaa;">USDCHF,H4</div>
<div class="b" style="left:356px;top:408.5px;width:0.8px;height:11px;background:#c8c8c8"></div>
<div class="t" style="left:362.5px;top:406.00px;font-size:8px;line-height:16px;color:#aaa;">GBPUSD,H4</div>
<div class="b" style="left:412.6px;top:408.5px;width:0.8px;height:11px;background:#c8c8c8"></div>
<div class="t" style="left:418.9px;top:406.00px;font-size:8px;line-height:16px;color:#aaa;">USDJPY,H4</div>
<div class="b" style="left:466px;top:408.5px;width:0.8px;height:11px;background:#c8c8c8"></div>
<div class="t" style="left:929.5px;top:406.50px;font-size:7px;line-height:14px;color:#888;">‹</div>
<div class="t" style="left:941px;top:406.50px;font-size:7px;line-height:14px;color:#888;">›</div>
<div class="b" style="left:0px;top:420.5px;width:950px;height:117.5px;background:#f0f0f0"></div>
<div class="b" style="left:0px;top:421px;width:10.3px;height:117px;background:#eef2f6"></div>
<div class="b" style="left:0px;top:433px;width:10.3px;height:80px;background:linear-gradient(90deg,#a9c2e0,#d4e2f2)"></div>
<div class="t" style="left:2px;top:420.50px;font-size:8px;line-height:16px;color:#111;font-weight:bold">×</div>
<div class="t" style="left:1px;top:513px;width:9px;font-size:7px;line-height:9px;color:#2a3a8a;white-space:normal;word-break:break-all">终端</div>
<div class="b" style="left:10.4px;top:424.5px;width:927.6px;height:88.5px;background:#fff"></div>
<div class="t" style="left:14px;top:424.80px;font-size:7.3px;line-height:14.6px;color:#333;">订单</div>
<div class="t" style="left:37px;top:426.10px;font-size:5px;line-height:10px;color:#bbb;">˄</div>
<div class="t" style="right:658.00px;top:424.80px;font-size:7.3px;line-height:14.6px;color:#333;">类型</div>
<div class="t" style="right:607.00px;top:424.80px;font-size:7.3px;line-height:14.6px;color:#333;">手数</div>
<div class="t" style="right:544.00px;top:424.80px;font-size:7.3px;line-height:14.6px;color:#333;">交易品种</div>
<div class="t" style="right:481.00px;top:424.80px;font-size:7.3px;line-height:14.6px;color:#333;">价格</div>
<div class="t" style="right:417.50px;top:424.80px;font-size:7.3px;line-height:14.6px;color:#333;">止损</div>
<div class="t" style="right:354.00px;top:424.80px;font-size:7.3px;line-height:14.6px;color:#333;">止盈</div>
<div class="t" style="right:216.00px;top:424.80px;font-size:7.3px;line-height:14.6px;color:#333;">时间</div>
<div class="t" style="right:152.50px;top:424.80px;font-size:7.3px;line-height:14.6px;color:#333;">价格</div>
<div class="t" style="right:89.00px;top:424.80px;font-size:7.3px;line-height:14.6px;color:#333;">库存费</div>
<div class="t" style="right:16.00px;top:424.80px;font-size:7.3px;line-height:14.6px;color:#333;">获利</div>
<div class="b" style="left:10.4px;top:437.2px;width:925.2px;height:12.6px;background:#0a78d7"></div>
<div class="t" style="left:24.4px;top:436.20px;font-size:8.2px;line-height:16.4px;color:#e0f2ff;">177812523</div>
<div class="t" style="right:720.30px;top:436.35px;font-size:8.05px;line-height:16.1px;color:#e0f2ff;">2023.12.28 17:35:21</div>
<div class="t" style="right:658.00px;top:436.35px;font-size:8.05px;line-height:16.1px;color:#e0f2ff;">sell</div>
<div class="t" style="right:607.00px;top:436.35px;font-size:8.05px;line-height:16.1px;color:#e0f2ff;">1.00</div>
<div class="t" style="right:544.00px;top:436.35px;font-size:8.05px;line-height:16.1px;color:#e0f2ff;">oil-feb24</div>
<div class="t" style="right:481.00px;top:436.35px;font-size:8.05px;line-height:16.1px;color:#e0f2ff;">73.39</div>
<div class="t" style="right:417.50px;top:436.35px;font-size:8.05px;line-height:16.1px;color:#e0f2ff;">0.00</div>
<div class="t" style="right:354.00px;top:436.35px;font-size:8.05px;line-height:16.1px;color:#e0f2ff;">0.00</div>
<div class="t" style="right:216.00px;top:436.35px;font-size:8.05px;line-height:16.1px;color:#e0f2ff;">2023.12.28 17:36:06</div>
<div class="t" style="right:152.50px;top:436.35px;font-size:8.05px;line-height:16.1px;color:#e0f2ff;">73.37</div>
<div class="t" style="right:89.00px;top:436.35px;font-size:8.05px;line-height:16.1px;color:#e0f2ff;">0.00</div>
<div class="t" style="right:16.00px;top:436.35px;font-size:8.05px;line-height:16.1px;color:#e0f2ff;">2.00</div>
<div class="t" style="left:24.4px;top:448.82px;font-size:8.2px;line-height:16.4px;color:#222;">177812581</div>
<div class="t" style="right:720.30px;top:448.97px;font-size:8.05px;line-height:16.1px;color:#222;">2023.12.28 17:35:57</div>
<div class="t" style="right:658.00px;top:448.97px;font-size:8.05px;line-height:16.1px;color:#222;">sell</div>
<div class="t" style="right:607.00px;top:448.97px;font-size:8.05px;line-height:16.1px;color:#222;">1.00</div>
<div class="t" style="right:544.00px;top:448.97px;font-size:8.05px;line-height:16.1px;color:#222;">gsoil-jan24</div>
<div class="t" style="right:481.00px;top:448.97px;font-size:8.05px;line-height:16.1px;color:#222;">769.53</div>
<div class="t" style="right:417.50px;top:448.97px;font-size:8.05px;line-height:16.1px;color:#222;">0.00</div>
<div class="t" style="right:354.00px;top:448.97px;font-size:8.05px;line-height:16.1px;color:#222;">0.00</div>
<div class="t" style="right:216.00px;top:448.97px;font-size:8.05px;line-height:16.1px;color:#222;">2023.12.29 03:00:12</div>
<div class="t" style="right:152.50px;top:448.97px;font-size:8.05px;line-height:16.1px;color:#222;">774.70</div>
<div class="t" style="right:89.00px;top:448.97px;font-size:8.05px;line-height:16.1px;color:#222;">0.00</div>
<div class="t" style="right:16.00px;top:448.97px;font-size:8.05px;line-height:16.1px;color:#222;">-59.37</div>
<div class="b" style="left:10.4px;top:462.44px;width:925.2px;height:12.6px;background:#f0f0f0"></div>
<div class="t" style="left:24.4px;top:461.44px;font-size:8.2px;line-height:16.4px;color:#222;">177900867</div>
<div class="t" style="right:720.30px;top:461.59px;font-size:8.05px;line-height:16.1px;color:#222;">2023.12.29 05:10:06</div>
<div class="t" style="right:658.00px;top:461.59px;font-size:8.05px;line-height:16.1px;color:#222;">sell</div>
<div class="t" style="right:607.00px;top:461.59px;font-size:8.05px;line-height:16.1px;color:#222;">1.00</div>
<div class="t" style="right:544.00px;top:461.59px;font-size:8.05px;line-height:16.1px;color:#222;">usdcnh</div>
<div class="t" style="right:481.00px;top:461.59px;font-size:8.05px;line-height:16.1px;color:#222;">7.0962</div>
<div class="t" style="right:417.50px;top:461.59px;font-size:8.05px;line-height:16.1px;color:#222;">0.0000</div>
<div class="t" style="right:354.00px;top:461.59px;font-size:8.05px;line-height:16.1px;color:#222;">0.0000</div>
<div class="t" style="right:216.00px;top:461.59px;font-size:8.05px;line-height:16.1px;color:#222;">2023.12.29 05:20:51</div>
<div class="t" style="right:152.50px;top:461.59px;font-size:8.05px;line-height:16.1px;color:#222;">7.1021</div>
<div class="t" style="right:89.00px;top:461.59px;font-size:8.05px;line-height:16.1px;color:#222;">0.00</div>
<div class="t" style="right:16.00px;top:461.59px;font-size:8.05px;line-height:16.1px;color:#222;">-83.10</div>
<div class="t" style="left:24.4px;top:474.06px;font-size:8.2px;line-height:16.4px;color:#222;">177901721</div>
<div class="t" style="right:720.30px;top:474.21px;font-size:8.05px;line-height:16.1px;color:#222;">2023.12.29 05:21:03</div>
<div class="t" style="right:658.00px;top:474.21px;font-size:8.05px;line-height:16.1px;color:#222;">sell</div>
<div class="t" style="right:607.00px;top:474.21px;font-size:8.05px;line-height:16.1px;color:#222;">1.00</div>
<div class="t" style="right:544.00px;top:474.21px;font-size:8.05px;line-height:16.1px;color:#222;">oil-feb24</div>
<div class="t" style="right:481.00px;top:474.21px;font-size:8.05px;line-height:16.1px;color:#222;">72.02</div>
<div class="t" style="right:417.50px;top:474.21px;font-size:8.05px;line-height:16.1px;color:#222;">0.00</div>
<div class="t" style="right:354.00px;top:474.21px;font-size:8.05px;line-height:16.1px;color:#222;">0.00</div>
<div class="t" style="right:216.00px;top:474.21px;font-size:8.05px;line-height:16.1px;color:#222;">2023.12.29 05:21:55</div>
<div class="t" style="right:152.50px;top:474.21px;font-size:8.05px;line-height:16.1px;color:#222;">72.06</div>
<div class="t" style="right:89.00px;top:474.21px;font-size:8.05px;line-height:16.1px;color:#222;">0.00</div>
<div class="t" style="right:16.00px;top:474.21px;font-size:8.05px;line-height:16.1px;color:#222;">-4.00</div>
<div class="b" style="left:10.4px;top:487.68px;width:925.2px;height:12.6px;background:#f0f0f0"></div>
<div class="t" style="left:24.4px;top:486.68px;font-size:8.2px;line-height:16.4px;color:#222;">177901791</div>
<div class="t" style="right:720.30px;top:486.83px;font-size:8.05px;line-height:16.1px;color:#222;">2023.12.29 05:21:29</div>
<div class="t" style="right:658.00px;top:486.83px;font-size:8.05px;line-height:16.1px;color:#222;">sell</div>
<div class="t" style="right:607.00px;top:486.83px;font-size:8.05px;line-height:16.1px;color:#222;">1.00</div>
<div class="t" style="right:544.00px;top:486.83px;font-size:8.05px;line-height:16.1px;color:#222;">silver</div>
<div class="t" style="right:481.00px;top:486.83px;font-size:8.05px;line-height:16.1px;color:#222;">23.795</div>
<div class="t" style="right:417.50px;top:486.83px;font-size:8.05px;line-height:16.1px;color:#222;">0.000</div>
<div class="t" style="right:354.00px;top:486.83px;font-size:8.05px;line-height:16.1px;color:#222;">0.000</div>
<div class="t" style="right:216.00px;top:486.83px;font-size:8.05px;line-height:16.1px;color:#222;">2023.12.29 05:22:17</div>
<div class="t" style="right:152.50px;top:486.83px;font-size:8.05px;line-height:16.1px;color:#222;">23.800</div>
<div class="t" style="right:89.00px;top:486.83px;font-size:8.05px;line-height:16.1px;color:#222;">0.00</div>
<div class="t" style="right:16.00px;top:486.83px;font-size:8.05px;line-height:16.1px;color:#222;">-250.00</div>
<div class="t" style="left:24.4px;top:499.30px;font-size:8.2px;line-height:16.4px;color:#222;">177920450</div>
<div class="t" style="right:720.30px;top:499.45px;font-size:8.05px;line-height:16.1px;color:#222;">2023.12.29 09:54:41</div>
<div class="t" style="right:658.00px;top:499.45px;font-size:8.05px;line-height:16.1px;color:#222;">sell</div>
<div class="t" style="right:607.00px;top:499.45px;font-size:8.05px;line-height:16.1px;color:#222;">1.00</div>
<div class="t" style="right:544.00px;top:499.45px;font-size:8.05px;line-height:16.1px;color:#222;">us100-mar24</div>
<div class="t" style="right:481.00px;top:499.45px;font-size:8.05px;line-height:16.1px;color:#222;">17106.50</div>
<div class="t" style="right:417.50px;top:499.45px;font-size:8.05px;line-height:16.1px;color:#222;">0.00</div>
<div class="t" style="right:354.00px;top:499.45px;font-size:8.05px;line-height:16.1px;color:#222;">0.00</div>
<div class="t" style="right:216.00px;top:499.45px;font-size:8.05px;line-height:16.1px;color:#222;">2023.12.29 09:59:29</div>
<div class="t" style="right:152.50px;top:499.45px;font-size:8.05px;line-height:16.1px;color:#222;">17109.75</div>
<div class="t" style="right:89.00px;top:499.45px;font-size:8.05px;line-height:16.1px;color:#222;">0.00</div>
<div class="t" style="right:16.00px;top:499.45px;font-size:8.05px;line-height:16.1px;color:#222;">-3.25</div>
<div class="b" style="left:92.6px;top:424.5px;width:0.8px;height:88.5px;background:#e6e6e6"></div>
<div class="b" style="left:231px;top:424.5px;width:0.8px;height:88.5px;background:#e6e6e6"></div>
<div class="b" style="left:295px;top:424.5px;width:0.8px;height:88.5px;background:#e6e6e6"></div>
<div class="b" style="left:345.3px;top:424.5px;width:0.8px;height:88.5px;background:#e6e6e6"></div>
<div class="b" style="left:408.6px;top:424.5px;width:0.8px;height:88.5px;background:#e6e6e6"></div>
<div class="b" style="left:471px;top:424.5px;width:0.8px;height:88.5px;background:#e6e6e6"></div>
<div class="b" style="left:534.8px;top:424.5px;width:0.8px;height:88.5px;background:#e6e6e6"></div>
<div class="b" style="left:598px;top:424.5px;width:0.8px;height:88.5px;background:#e6e6e6"></div>
<div class="b" style="left:735.9px;top:424.5px;width:0.8px;height:88.5px;background:#e6e6e6"></div>
<div class="b" style="left:799.5px;top:424.5px;width:0.8px;height:88.5px;background:#e6e6e6"></div>
<div class="b" style="left:862.8px;top:424.5px;width:0.8px;height:88.5px;background:#e6e6e6"></div>
<div class="b" style="left:935.6px;top:424.5px;width:0.8px;height:88.5px;background:#e6e6e6"></div>
<div class="b" style="left:10.4px;top:436.9px;width:925.2px;height:0.8px;background:#e4e4e4"></div>
<svg width="950" height="538" style="position:absolute;left:0;top:0"><path d="M13.5 439.9h4l2 2v7h-6z" fill="#fff" stroke="#777" stroke-width="0.6"/><circle cx="18.6" cy="447.2" r="2.1" fill="#d83a20"/><path d="M13.5 452.52h4l2 2v7h-6z" fill="#fff" stroke="#777" stroke-width="0.6"/><circle cx="18.6" cy="459.82" r="2.1" fill="#d83a20"/><path d="M13.5 465.14h4l2 2v7h-6z" fill="#fff" stroke="#777" stroke-width="0.6"/><circle cx="18.6" cy="472.44" r="2.1" fill="#d83a20"/><path d="M13.5 477.76h4l2 2v7h-6z" fill="#fff" stroke="#777" stroke-width="0.6"/><circle cx="18.6" cy="485.06" r="2.1" fill="#d83a20"/><path d="M13.5 490.38h4l2 2v7h-6z" fill="#fff" stroke="#777" stroke-width="0.6"/><circle cx="18.6" cy="497.68" r="2.1" fill="#d83a20"/><path d="M13.5 502.99999999999994h4l2 2v7h-6z" fill="#fff" stroke="#777" stroke-width="0.6"/><circle cx="18.6" cy="510.29999999999995" r="2.1" fill="#d83a20"/></svg>
<div class="b" style="left:10.4px;top:512.5px;width:939.6px;height:9.5px;background:#d6d6d6"></div>
<div class="t" style="left:18px;top:512.00px;font-size:7.8px;line-height:15.6px;color:#222;font-weight:bold">盈/亏: -379.00  保证金: 0.00  存款: 10 000.00  可用: 0.00</div>
<div class="t" style="right:16.00px;top:512.00px;font-size:7.8px;line-height:15.6px;color:#222;font-weight:bold">-521.75</div>
<div class="b" style="left:937.5px;top:424.5px;width:12.5px;height:88.5px;background:#fafafa;border-left:1px solid #e0e0e0"></div>
<div class="b" style="left:10.4px;top:521.5px;width:939.6px;height:16.5px;background:#f0f0f0;border-top:1px solid #a8a8a8"></div>
<div class="b" style="left:65px;top:521.5px;width:46px;height:15.5px;background:#fff;border:1px solid #9a9a9a;border-top:none"></div>
<div class="t" style="left:18px;top:519.20px;font-size:7.6px;line-height:15.2px;color:#999;">交易</div>
<div class="t" style="left:44px;top:519.20px;font-size:7.6px;line-height:15.2px;color:#999;">展示</div>
<div class="t" style="left:71px;top:518.60px;font-size:7.6px;line-height:15.2px;color:#222;">账户历史</div>
<div class="t" style="left:117px;top:519.20px;font-size:7.6px;line-height:15.2px;color:#999;">新闻</div>
<div class="t" style="left:145px;top:519.20px;font-size:7.6px;line-height:15.2px;color:#999;">警报</div>
<div class="t" style="left:172.5px;top:519.20px;font-size:7.6px;line-height:15.2px;color:#999;">邮箱</div>
<div class="t" style="left:189.2px;top:522.00px;font-size:6.5px;line-height:13.0px;color:#d03030;font-weight:bold">7</div>
<div class="t" style="left:205.5px;top:519.20px;font-size:7.6px;line-height:15.2px;color:#999;">市场</div>
<div class="t" style="left:222.2px;top:522.00px;font-size:6.5px;line-height:13.0px;color:#d03030;font-weight:bold">109</div>
<div class="t" style="left:247px;top:519.20px;font-size:7.6px;line-height:15.2px;color:#999;">信号</div>
<div class="t" style="left:275px;top:519.20px;font-size:7.6px;line-height:15.2px;color:#999;">文章</div>
<div class="t" style="left:302.5px;top:519.20px;font-size:7.6px;line-height:15.2px;color:#999;">代码库</div>
<div class="t" style="left:338.5px;top:519.20px;font-size:7.6px;line-height:15.2px;color:#999;">EA</div>
<div class="t" style="left:360.5px;top:519.20px;font-size:7.6px;line-height:15.2px;color:#999;">日志</div>
<div class="b" style="left:38.5px;top:524.5px;width:0.8px;height:10px;background:#c4c4c4"></div>
<div class="b" style="left:139px;top:524.5px;width:0.8px;height:10px;background:#c4c4c4"></div>
<div class="b" style="left:167px;top:524.5px;width:0.8px;height:10px;background:#c4c4c4"></div>
<div class="b" style="left:200px;top:524.5px;width:0.8px;height:10px;background:#c4c4c4"></div>
<div class="b" style="left:241px;top:524.5px;width:0.8px;height:10px;background:#c4c4c4"></div>
<div class="b" style="left:268.5px;top:524.5px;width:0.8px;height:10px;background:#c4c4c4"></div>
<div class="b" style="left:297px;top:524.5px;width:0.8px;height:10px;background:#c4c4c4"></div>
<div class="b" style="left:332.7px;top:524.5px;width:0.8px;height:10px;background:#c4c4c4"></div>
<div class="b" style="left:355.5px;top:524.5px;width:0.8px;height:10px;background:#c4c4c4"></div>
<div class="b" style="left:383.6px;top:524.5px;width:0.8px;height:10px;background:#c4c4c4"></div>
<div class="b" style="left:128px;top:284.5px;width:125px;height:163px;background:#fff;border:1px solid #c8c8c8;box-shadow:1.5px 1.5px 1px rgba(0,0,0,0.18)"></div>
<div class="b" style="left:129px;top:285.5px;width:16px;height:161px;background:#f4f4f4"></div>
<div class="b" style="left:129px;top:326px;width:123px;height:13.8px;background:#c5daf0;border:1px solid #a8c4e4"></div>
<div class="t" style="left:150px;top:285.95px;font-size:7.65px;line-height:15.3px;color:#222;">所有交易记录(H)</div>
<div class="t" style="left:150px;top:298.95px;font-size:7.65px;line-height:15.3px;color:#222;">最近3个月(3)</div>
<div class="t" style="left:150px;top:312.35px;font-size:7.65px;line-height:15.3px;color:#222;">本月(M)</div>
<div class="t" style="left:150px;top:325.55px;font-size:7.65px;line-height:15.3px;color:#222;">自定义时段(P)...</div>
<div class="t" style="left:150px;top:345.65px;font-size:7.65px;line-height:15.3px;color:#222;">保存为户口结单(S)</div>
<div class="t" style="left:150px;top:358.95px;font-size:7.65px;line-height:15.3px;color:#222;">保存为详细户口结单(D)</div>
<div class="t" style="left:150px;top:378.55px;font-size:7.65px;line-height:15.3px;color:#222;">手续费(o)</div>
<div class="t" style="left:150px;top:392.15px;font-size:7.65px;line-height:15.3px;color:#222;">税金(x)</div>
<div class="t" style="left:150px;top:405.35px;font-size:7.65px;line-height:15.3px;color:#222;">注释(C)</div>
<div class="t" style="left:150px;top:419.25px;font-size:7.65px;line-height:15.3px;color:#222;">自动排列(A)</div>
<div class="t" style="left:150px;top:432.55px;font-size:7.65px;line-height:15.3px;color:#222;">网格(G)</div>
<div class="b" style="left:146px;top:344px;width:105px;height:0.8px;background:#f2f2f2"></div>
<div class="b" style="left:146px;top:375.5px;width:105px;height:0.8px;background:#f2f2f2"></div>
<div class="t" style="left:240px;top:419.40px;font-size:7.5px;line-height:15.0px;color:#222;">A</div>
<div class="t" style="left:240px;top:432.70px;font-size:7.5px;line-height:15.0px;color:#222;">G</div>
<svg width="950" height="538" style="position:absolute;left:0;top:0"><path d="M134.6 427l1.6 1.8 3-3.6" stroke="#222" stroke-width="1.3" fill="none"/><path d="M134.6 440.3l1.6 1.8 3-3.6" stroke="#222" stroke-width="1.3" fill="none"/><path d="M131.5 336a4.5 4.5 0 0 1 3-6.5" stroke="#4a7ac8" stroke-width="1.8" fill="none"/><path d="M134.5 329.5a4.5 4.5 0 0 1 4.5 1.8" stroke="#50a050" stroke-width="1.8" fill="none"/><path d="M139 331.3a4.5 4.5 0 0 1 1.3 4.7" stroke="#e0b030" stroke-width="1.8" fill="none"/><path d="M135.5 334.5l3.5 2" stroke="#d09020" stroke-width="1.4"/><rect x="132" y="347.5" width="7" height="9" fill="#f0f4f8" stroke="#8aa0b8" stroke-width="0.7"/><rect x="135" y="352" width="5.5" height="5" fill="#4a90d8"/><path d="M136.5 353.5l1.3 1.5 1.3-1.5" stroke="#fff" stroke-width="0.7" fill="none"/></svg>
<div class="b" style="left:126.6px;top:324.3px;width:86.6px;height:14.2px;border:2px solid #e0302a;border-radius:1.5px"></div>
<div class="b" style="left:62.5px;top:516.5px;width:48.5px;height:19.5px;border:2px solid #e0302a;border-radius:1.5px"></div>
<div class="b" style="left:0px;top:512.5px;width:17.5px;height:24px;border:2px solid #e0302a;border-radius:1.5px"></div>
<div class="t" style="left:714px;top:440px;font-size:53px;line-height:66px;font-weight:700;color:#fff;letter-spacing:2.5px;-webkit-text-stroke:2px #fff;text-shadow:-1.5px 2px 0 #3a3a3a,-2.5px 3px 0 #5a5a5a,-3.5px 4px 1px #999;transform:skewX(-10deg);transform-origin:0 100%">海马财经</div>
<div class="t" style="left:718px;top:505px;font-size:29px;line-height:34px;font-weight:bold;font-style:italic;color:#3288e0;letter-spacing:12px;-webkit-text-stroke:1.6px #2f82da;text-shadow:1px 1px 0 #1a4f96,-0.6px -0.6px 0 #2a6ab8;transform:none">zzrt01.cn</div>
<div class="b" style="left:838px;top:531.5px;width:17px;height:7px;border:2px solid #e8602a;border-bottom:none;border-radius:3px 3px 0 0"></div>
</body></html>
